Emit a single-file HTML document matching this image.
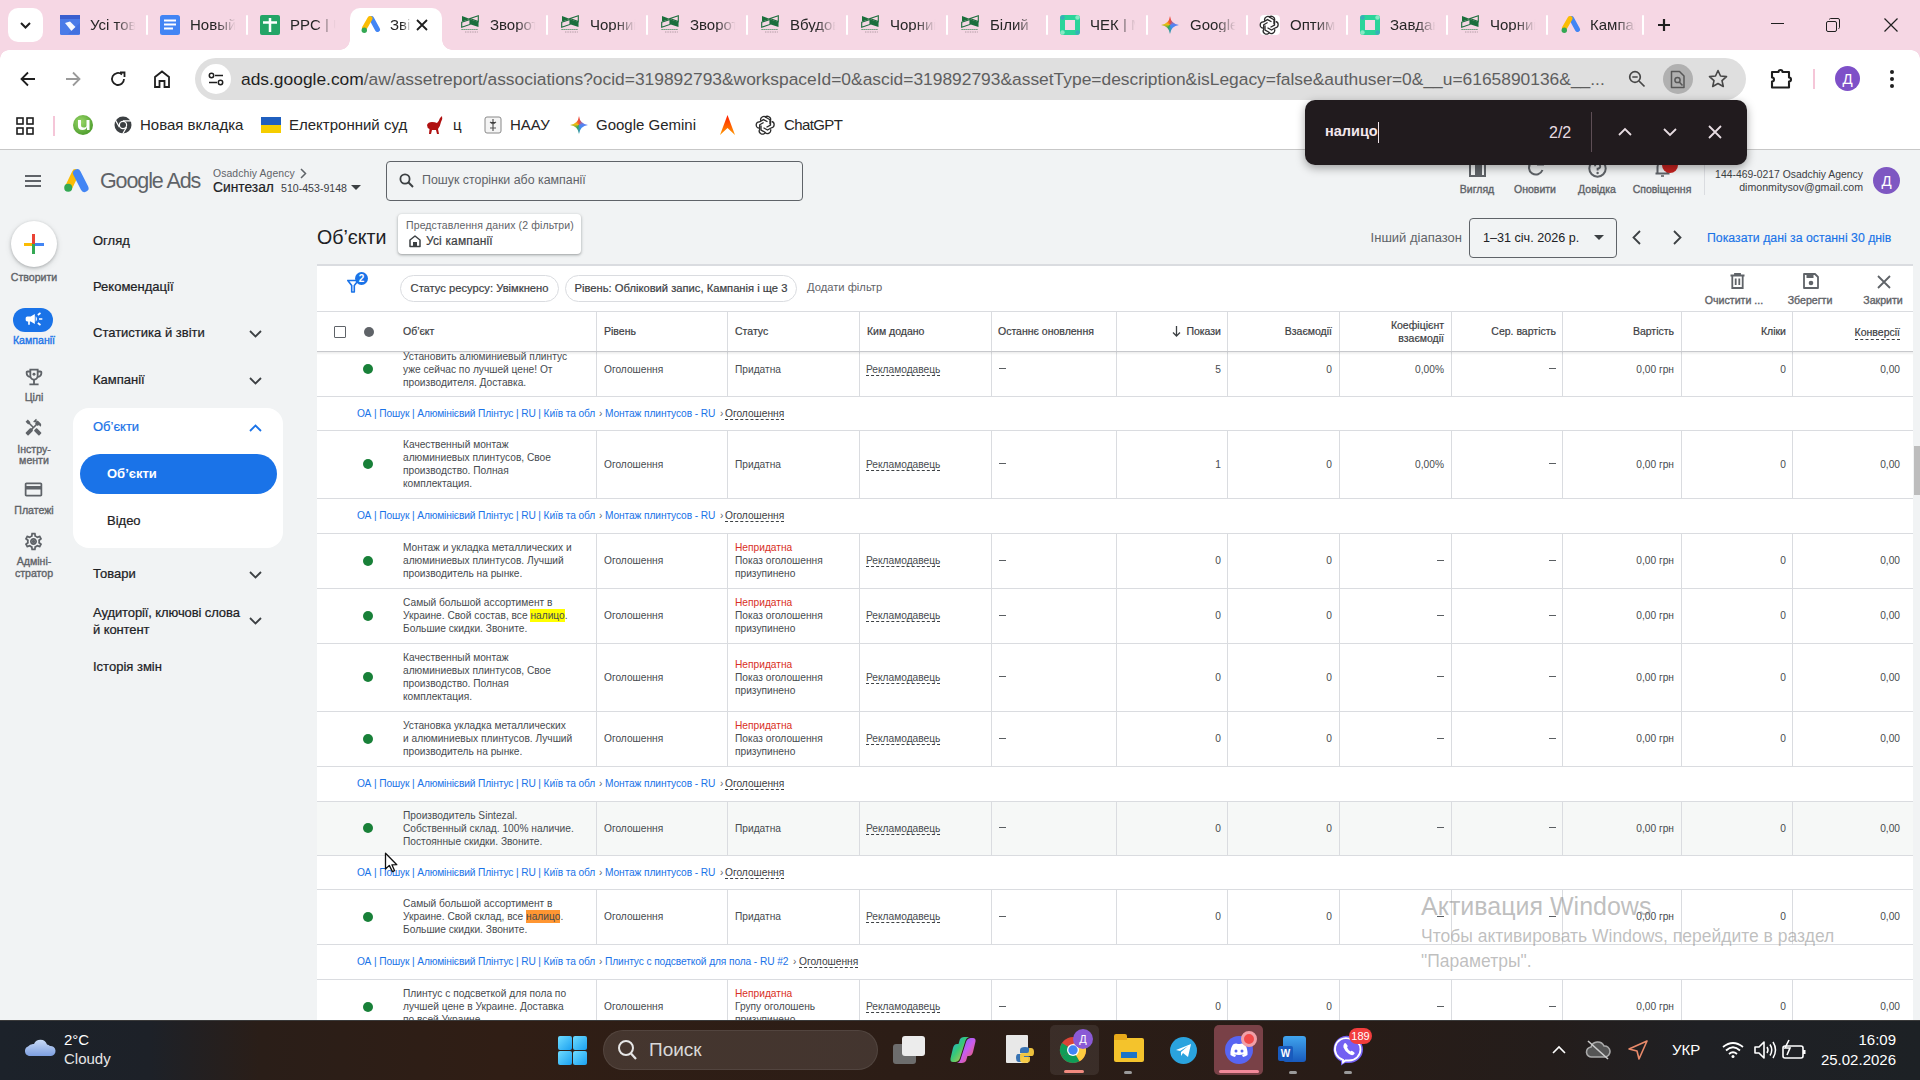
<!DOCTYPE html><html><head><meta charset="utf-8"><style>
*{margin:0;padding:0;box-sizing:border-box}
html,body{width:1920px;height:1080px;overflow:hidden;background:#f1f3f4;font-family:"Liberation Sans",sans-serif;position:relative}
.abs{position:absolute}
.t{position:absolute;white-space:nowrap;line-height:1}
svg{position:absolute;overflow:visible}
.m{-webkit-text-stroke-width:0.35px}
.m2{-webkit-text-stroke-width:0.2px}
</style></head><body>
<div class="abs" style="left:0;top:0;width:1920px;height:50px;background:#f6d7e4"></div>
<div class="abs" style="left:8px;top:8px;width:35px;height:34px;background:#fff;border-radius:10px"></div>
<svg style="left:19px;top:19px" width="13" height="12" viewBox="0 0 13 12"><path d="M2 4 L6.5 8.5 L11 4" stroke="#1f1f1f" stroke-width="2" fill="none"/></svg>
<div class="abs" style="left:146px;top:15px;width:2px;height:20px;background:#fff;border-radius:1px"></div>
<svg style="left:60px;top:15px" width="20" height="20" viewBox="0 0 20 20"><rect width="20" height="20" rx="1.5" fill="#4a7be8"/><rect width="20" height="4" fill="#3a5fcf"/><path d="M5 8L10 6.5L15.5 12L11.5 16Z" fill="#fff" opacity=".95"/><path d="M8 19L20 19V8Z" fill="#3a66d6" opacity=".5"/></svg>
<div class="t" style="left:90px;top:17px;font-size:15px;color:#262626;width:48px;overflow:hidden;-webkit-mask-image:linear-gradient(90deg,#000 55%,transparent 95%)">Усі товари</div>
<div class="abs" style="left:246px;top:15px;width:2px;height:20px;background:#fff;border-radius:1px"></div>
<svg style="left:160px;top:15px" width="20" height="20" viewBox="0 0 20 20"><rect width="20" height="20" rx="2.5" fill="#4285f4"/><path d="M4 5.5H16M4 9.5H16M4 13.5H13" stroke="#fff" stroke-width="2"/></svg>
<div class="t" style="left:190px;top:17px;font-size:15px;color:#262626;width:48px;overflow:hidden;-webkit-mask-image:linear-gradient(90deg,#000 55%,transparent 95%)">Новый</div>
<svg style="left:260px;top:15px" width="20" height="20" viewBox="0 0 20 20"><rect width="20" height="20" rx="2" fill="#23a566"/><path d="M10 3V17M3 7.5H17" stroke="#fff" stroke-width="2.5"/></svg>
<div class="t" style="left:290px;top:17px;font-size:15px;color:#262626;width:48px;overflow:hidden;-webkit-mask-image:linear-gradient(90deg,#000 55%,transparent 95%)">PPC | Ukr</div>
<div class="abs" style="left:350px;top:8px;width:92px;height:42px;background:#fff;border-radius:10px 10px 0 0"></div>
<div class="abs" style="left:340px;top:40px;width:10px;height:10px;background:radial-gradient(circle at 0 0,transparent 9.5px,#fff 10px)"></div>
<div class="abs" style="left:442px;top:40px;width:10px;height:10px;background:radial-gradient(circle at 100% 0,transparent 9.5px,#fff 10px)"></div>
<svg style="left:361px;top:16px" width="19" height="18" viewBox="0 0 19 18"><path d="M10.5 2.5L16.5 13.5" stroke="#4285f4" stroke-width="5" stroke-linecap="round"/><path d="M9 2.5L3.5 12" stroke="#fbbc04" stroke-width="5" stroke-linecap="round"/><circle cx="3.3" cy="14.2" r="2.7" fill="#34a853"/></svg>
<div class="t" style="left:390px;top:17px;font-size:15px;color:#262626;width:22px;overflow:hidden;-webkit-mask-image:linear-gradient(90deg,#000 55%,transparent 95%)">Звіт</div>
<div class="abs" style="left:546px;top:15px;width:2px;height:20px;background:#fff;border-radius:1px"></div>
<svg style="left:461px;top:15px" width="18" height="19" viewBox="0 0 18 19"><path d="M1 1L9 4L1 6.5Z" fill="#1b6e3c"/><path d="M9 4.2L17.5 7V12L9 9.3Z" fill="#1b6e3c"/><path d="M9 3.6L17.3 0.8V6.6Z" stroke="#1b6e3c" stroke-width="1.1" fill="none"/><path d="M0.7 7.2L9 4.5V9.4L0.7 12.2Z" stroke="#1b6e3c" stroke-width="1.1" fill="none"/><path d="M0.5 14.5H17" stroke="#3f8a5a" stroke-width="1.2" stroke-dasharray="1.2 0.8"/><path d="M4 17H17" stroke="#8a7a80" stroke-width="0.8" stroke-dasharray="0.8 0.9"/></svg>
<div class="t" style="left:490px;top:17px;font-size:15px;color:#262626;width:48px;overflow:hidden;-webkit-mask-image:linear-gradient(90deg,#000 55%,transparent 95%)">Зворот</div>
<div class="abs" style="left:646px;top:15px;width:2px;height:20px;background:#fff;border-radius:1px"></div>
<svg style="left:561px;top:15px" width="18" height="19" viewBox="0 0 18 19"><path d="M1 1L9 4L1 6.5Z" fill="#1b6e3c"/><path d="M9 4.2L17.5 7V12L9 9.3Z" fill="#1b6e3c"/><path d="M9 3.6L17.3 0.8V6.6Z" stroke="#1b6e3c" stroke-width="1.1" fill="none"/><path d="M0.7 7.2L9 4.5V9.4L0.7 12.2Z" stroke="#1b6e3c" stroke-width="1.1" fill="none"/><path d="M0.5 14.5H17" stroke="#3f8a5a" stroke-width="1.2" stroke-dasharray="1.2 0.8"/><path d="M4 17H17" stroke="#8a7a80" stroke-width="0.8" stroke-dasharray="0.8 0.9"/></svg>
<div class="t" style="left:590px;top:17px;font-size:15px;color:#262626;width:48px;overflow:hidden;-webkit-mask-image:linear-gradient(90deg,#000 55%,transparent 95%)">Чорний</div>
<div class="abs" style="left:746px;top:15px;width:2px;height:20px;background:#fff;border-radius:1px"></div>
<svg style="left:661px;top:15px" width="18" height="19" viewBox="0 0 18 19"><path d="M1 1L9 4L1 6.5Z" fill="#1b6e3c"/><path d="M9 4.2L17.5 7V12L9 9.3Z" fill="#1b6e3c"/><path d="M9 3.6L17.3 0.8V6.6Z" stroke="#1b6e3c" stroke-width="1.1" fill="none"/><path d="M0.7 7.2L9 4.5V9.4L0.7 12.2Z" stroke="#1b6e3c" stroke-width="1.1" fill="none"/><path d="M0.5 14.5H17" stroke="#3f8a5a" stroke-width="1.2" stroke-dasharray="1.2 0.8"/><path d="M4 17H17" stroke="#8a7a80" stroke-width="0.8" stroke-dasharray="0.8 0.9"/></svg>
<div class="t" style="left:690px;top:17px;font-size:15px;color:#262626;width:48px;overflow:hidden;-webkit-mask-image:linear-gradient(90deg,#000 55%,transparent 95%)">Зворот</div>
<div class="abs" style="left:846px;top:15px;width:2px;height:20px;background:#fff;border-radius:1px"></div>
<svg style="left:761px;top:15px" width="18" height="19" viewBox="0 0 18 19"><path d="M1 1L9 4L1 6.5Z" fill="#1b6e3c"/><path d="M9 4.2L17.5 7V12L9 9.3Z" fill="#1b6e3c"/><path d="M9 3.6L17.3 0.8V6.6Z" stroke="#1b6e3c" stroke-width="1.1" fill="none"/><path d="M0.7 7.2L9 4.5V9.4L0.7 12.2Z" stroke="#1b6e3c" stroke-width="1.1" fill="none"/><path d="M0.5 14.5H17" stroke="#3f8a5a" stroke-width="1.2" stroke-dasharray="1.2 0.8"/><path d="M4 17H17" stroke="#8a7a80" stroke-width="0.8" stroke-dasharray="0.8 0.9"/></svg>
<div class="t" style="left:790px;top:17px;font-size:15px;color:#262626;width:48px;overflow:hidden;-webkit-mask-image:linear-gradient(90deg,#000 55%,transparent 95%)">Вбудов</div>
<div class="abs" style="left:946px;top:15px;width:2px;height:20px;background:#fff;border-radius:1px"></div>
<svg style="left:861px;top:15px" width="18" height="19" viewBox="0 0 18 19"><path d="M1 1L9 4L1 6.5Z" fill="#1b6e3c"/><path d="M9 4.2L17.5 7V12L9 9.3Z" fill="#1b6e3c"/><path d="M9 3.6L17.3 0.8V6.6Z" stroke="#1b6e3c" stroke-width="1.1" fill="none"/><path d="M0.7 7.2L9 4.5V9.4L0.7 12.2Z" stroke="#1b6e3c" stroke-width="1.1" fill="none"/><path d="M0.5 14.5H17" stroke="#3f8a5a" stroke-width="1.2" stroke-dasharray="1.2 0.8"/><path d="M4 17H17" stroke="#8a7a80" stroke-width="0.8" stroke-dasharray="0.8 0.9"/></svg>
<div class="t" style="left:890px;top:17px;font-size:15px;color:#262626;width:48px;overflow:hidden;-webkit-mask-image:linear-gradient(90deg,#000 55%,transparent 95%)">Чорний</div>
<div class="abs" style="left:1046px;top:15px;width:2px;height:20px;background:#fff;border-radius:1px"></div>
<svg style="left:961px;top:15px" width="18" height="19" viewBox="0 0 18 19"><path d="M1 1L9 4L1 6.5Z" fill="#1b6e3c"/><path d="M9 4.2L17.5 7V12L9 9.3Z" fill="#1b6e3c"/><path d="M9 3.6L17.3 0.8V6.6Z" stroke="#1b6e3c" stroke-width="1.1" fill="none"/><path d="M0.7 7.2L9 4.5V9.4L0.7 12.2Z" stroke="#1b6e3c" stroke-width="1.1" fill="none"/><path d="M0.5 14.5H17" stroke="#3f8a5a" stroke-width="1.2" stroke-dasharray="1.2 0.8"/><path d="M4 17H17" stroke="#8a7a80" stroke-width="0.8" stroke-dasharray="0.8 0.9"/></svg>
<div class="t" style="left:990px;top:17px;font-size:15px;color:#262626;width:48px;overflow:hidden;-webkit-mask-image:linear-gradient(90deg,#000 55%,transparent 95%)">Білий</div>
<div class="abs" style="left:1146px;top:15px;width:2px;height:20px;background:#fff;border-radius:1px"></div>
<svg style="left:1060px;top:15px" width="20" height="20" viewBox="0 0 20 20"><rect x="0" y="0" width="20" height="20" rx="3" fill="#2bd49a"/><rect x="5" y="5" width="10" height="10" fill="#f6d7e4"/><circle cx="2.5" cy="2.5" r="2.2" fill="#3aa6c0" opacity=".8"/><circle cx="17.5" cy="17.5" r="2.2" fill="#3aa6c0" opacity=".8"/><circle cx="17.5" cy="2.5" r="2.2" fill="#9ef0d0" opacity=".8"/><circle cx="2.5" cy="17.5" r="2.2" fill="#9ef0d0" opacity=".8"/></svg>
<div class="t" style="left:1090px;top:17px;font-size:15px;color:#262626;width:48px;overflow:hidden;-webkit-mask-image:linear-gradient(90deg,#000 55%,transparent 95%)">ЧЕК | М</div>
<div class="abs" style="left:1246px;top:15px;width:2px;height:20px;background:#fff;border-radius:1px"></div>
<div class="abs" style="left:1161px;top:16px;width:18px;height:18px;background:conic-gradient(from 0deg,#f04a3a 0deg,#5a7ff0 80deg,#3f8cf2 150deg,#34a853 215deg,#f5c010 285deg,#f04a3a 360deg);clip-path:path('M9.0 0Q10.0 8.0 18.0 9.0Q10.0 10.0 9.0 18.0Q8.0 10.0 0 9.0Q8.0 8.0 9.0 0Z')"></div>
<div class="t" style="left:1190px;top:17px;font-size:15px;color:#262626;width:48px;overflow:hidden;-webkit-mask-image:linear-gradient(90deg,#000 55%,transparent 95%)">Google</div>
<div class="abs" style="left:1346px;top:15px;width:2px;height:20px;background:#fff;border-radius:1px"></div>
<svg style="left:1260px;top:15px" width="20" height="20" viewBox="0 0 20 20"><rect width="20" height="20" rx="4" fill="#fff"/></svg><svg style="left:1261px;top:16px" width="18" height="18" viewBox="0 0 18 18"><g fill="none" stroke="#2b2b2b" stroke-width="1.3"><path d="M8 1.5A3.2 3.2 0 0 1 13.5 4.5L13.5 9L9.5 11.3"/><path d="M14.6 5.5A3.2 3.2 0 0 1 14.4 11.8L10.5 14L6.5 11.8"/><path d="M13.5 13.2A3.2 3.2 0 0 1 8 16.3L4 14L4 9.5"/><path d="M8.3 16.5A3.2 3.2 0 0 1 2.7 13.3L2.7 8.8L6.6 6.5"/><path d="M2.2 12.2A3.2 3.2 0 0 1 2.6 5.8L6.5 3.6L10.5 5.8"/><path d="M3.8 4.8A3.2 3.2 0 0 1 9.2 1.6L13 3.8L13 8.3"/></g></svg>
<div class="t" style="left:1290px;top:17px;font-size:15px;color:#262626;width:48px;overflow:hidden;-webkit-mask-image:linear-gradient(90deg,#000 55%,transparent 95%)">Оптими</div>
<div class="abs" style="left:1446px;top:15px;width:2px;height:20px;background:#fff;border-radius:1px"></div>
<svg style="left:1360px;top:15px" width="20" height="20" viewBox="0 0 20 20"><rect x="0" y="0" width="20" height="20" rx="3" fill="#2bd49a"/><rect x="5" y="5" width="10" height="10" fill="#f6d7e4"/><circle cx="2.5" cy="2.5" r="2.2" fill="#3aa6c0" opacity=".8"/><circle cx="17.5" cy="17.5" r="2.2" fill="#3aa6c0" opacity=".8"/><circle cx="17.5" cy="2.5" r="2.2" fill="#9ef0d0" opacity=".8"/><circle cx="2.5" cy="17.5" r="2.2" fill="#9ef0d0" opacity=".8"/></svg>
<div class="t" style="left:1390px;top:17px;font-size:15px;color:#262626;width:48px;overflow:hidden;-webkit-mask-image:linear-gradient(90deg,#000 55%,transparent 95%)">Завдан</div>
<div class="abs" style="left:1546px;top:15px;width:2px;height:20px;background:#fff;border-radius:1px"></div>
<svg style="left:1461px;top:15px" width="18" height="19" viewBox="0 0 18 19"><path d="M1 1L9 4L1 6.5Z" fill="#1b6e3c"/><path d="M9 4.2L17.5 7V12L9 9.3Z" fill="#1b6e3c"/><path d="M9 3.6L17.3 0.8V6.6Z" stroke="#1b6e3c" stroke-width="1.1" fill="none"/><path d="M0.7 7.2L9 4.5V9.4L0.7 12.2Z" stroke="#1b6e3c" stroke-width="1.1" fill="none"/><path d="M0.5 14.5H17" stroke="#3f8a5a" stroke-width="1.2" stroke-dasharray="1.2 0.8"/><path d="M4 17H17" stroke="#8a7a80" stroke-width="0.8" stroke-dasharray="0.8 0.9"/></svg>
<div class="t" style="left:1490px;top:17px;font-size:15px;color:#262626;width:48px;overflow:hidden;-webkit-mask-image:linear-gradient(90deg,#000 55%,transparent 95%)">Чорний</div>
<div class="abs" style="left:1642px;top:15px;width:2px;height:20px;background:#fff;border-radius:1px"></div>
<svg style="left:1561px;top:16px" width="19" height="18" viewBox="0 0 19 18"><path d="M10.5 2.5L16.5 13.5" stroke="#4285f4" stroke-width="5" stroke-linecap="round"/><path d="M9 2.5L3.5 12" stroke="#fbbc04" stroke-width="5" stroke-linecap="round"/><circle cx="3.3" cy="14.2" r="2.7" fill="#34a853"/></svg>
<div class="t" style="left:1590px;top:17px;font-size:15px;color:#262626;width:48px;overflow:hidden;-webkit-mask-image:linear-gradient(90deg,#000 55%,transparent 95%)">Кампанії</div>
<svg style="left:416px;top:19px" width="12" height="12" viewBox="0 0 12 12"><path d="M1 1L11 11M11 1L1 11" stroke="#1f1f1f" stroke-width="1.8"/></svg>
<svg style="left:1658px;top:19px" width="12" height="12" viewBox="0 0 12 12"><path d="M6 0V12M0 6H12" stroke="#1f1f1f" stroke-width="2.2"/></svg>
<div class="abs" style="left:1771px;top:23px;width:13px;height:1px;background:#1f1f1f"></div>
<svg style="left:1826px;top:18px" width="14" height="14" viewBox="0 0 14 14"><rect x="0.5" y="3.5" width="10" height="10" rx="1.5" stroke="#1f1f1f" fill="none"/><path d="M3.5 1.5 Q3.5 0.5 4.5 0.5 H12 Q13.5 0.5 13.5 2 V9.5 Q13.5 10.5 12.5 10.5" stroke="#1f1f1f" fill="none"/></svg>
<svg style="left:1884px;top:18px" width="14" height="14" viewBox="0 0 14 14"><path d="M0.5 0.5L13.5 13.5M13.5 0.5L0.5 13.5" stroke="#1f1f1f" stroke-width="1.2"/></svg>
<div class="abs" style="left:0;top:50px;width:1920px;height:100px;background:#fff"></div>
<div class="abs" style="left:0;top:50px;width:9px;height:9px;background:radial-gradient(circle at 100% 100%,#fff 8.5px,#f6d7e4 9px)"></div>
<div class="abs" style="left:1911px;top:50px;width:9px;height:9px;background:radial-gradient(circle at 0 100%,#fff 8.5px,#f6d7e4 9px)"></div>
<svg style="left:20px;top:71px" width="16" height="16" viewBox="0 0 16 16"><path d="M15 8H2M8 1.5L1.5 8L8 14.5" stroke="#1f1f1f" stroke-width="1.8" fill="none"/></svg>
<svg style="left:65px;top:71px" width="16" height="16" viewBox="0 0 16 16"><path d="M1 8H14M8 1.5L14.5 8L8 14.5" stroke="#9a9a9a" stroke-width="1.8" fill="none"/></svg>
<svg style="left:110px;top:71px" width="16" height="16" viewBox="0 0 16 16"><path d="M14 8A6 6 0 1 1 12 3.5" stroke="#1f1f1f" stroke-width="1.8" fill="none"/><path d="M10 1.5H14.5V6" stroke="#1f1f1f" stroke-width="1.8" fill="none"/></svg>
<svg style="left:154px;top:70px" width="16" height="18" viewBox="0 0 16 18"><path d="M1 17V7L8 1.5L15 7V17H10.5V11H5.5V17Z" stroke="#1f1f1f" stroke-width="1.8" fill="none" stroke-linejoin="miter"/></svg>
<div class="abs" style="left:195px;top:58px;width:1551px;height:42px;background:#dfdfdf;border-radius:21px"></div>
<div class="abs" style="left:201px;top:64px;width:30px;height:30px;background:#fff;border-radius:15px"></div>
<svg style="left:208px;top:72px" width="16" height="14" viewBox="0 0 16 14"><circle cx="3.5" cy="3.5" r="2.2" stroke="#1f1f1f" stroke-width="1.5" fill="none"/><path d="M7 3.5H15M1 10.5H9" stroke="#1f1f1f" stroke-width="1.5"/><circle cx="12.5" cy="10.5" r="2.2" stroke="#1f1f1f" stroke-width="1.5" fill="none"/></svg>
<div class="t" id="url" style="left:241px;top:71px;font-size:17.4px;color:#1f1f1f"><span>ads.google.com</span><span style="color:#5e5e5e">/aw/assetreport/associations?ocid=319892793&amp;workspaceId=0&amp;ascid=319892793&amp;assetType=description&amp;isLegacy=false&amp;authuser=0&amp;__u=6165890136&amp;__...</span></div>
<svg style="left:1628px;top:70px" width="18" height="18" viewBox="0 0 18 18"><circle cx="7" cy="7" r="5.3" stroke="#474747" stroke-width="1.7" fill="none"/><path d="M11 11L16.5 16.5M4.3 7H9.7" stroke="#474747" stroke-width="1.7"/></svg>
<div class="abs" style="left:1663px;top:64px;width:30px;height:30px;background:#b0b0b0;border-radius:15px"></div>
<svg style="left:1670px;top:70px" width="16" height="19" viewBox="0 0 16 19"><path d="M1.5 1.5H9.5L14 6V17.5H1.5Z" stroke="#575757" stroke-width="1.5" fill="none" stroke-linejoin="round"/><circle cx="7.5" cy="10" r="2.6" stroke="#575757" stroke-width="1.5" fill="none"/><path d="M9.3 12L12.5 15.5" stroke="#575757" stroke-width="1.5"/></svg>
<svg style="left:1708px;top:69px" width="20" height="19" viewBox="0 0 20 19"><path d="M10 1.5L12.5 7L18.5 7.6L14 11.6L15.3 17.5L10 14.5L4.7 17.5L6 11.6L1.5 7.6L7.5 7Z" stroke="#474747" stroke-width="1.6" fill="none" stroke-linejoin="round"/></svg>
<svg style="left:1770px;top:66px" width="24" height="24" viewBox="0 0 24 24"><path d="M2 6H8.5A2 2 0 0 1 12.5 6H19V11.5A2 2 0 0 1 19 15.5V21.5H2V15.5A2 2 0 0 0 2 11.5Z" stroke="#1f1f1f" stroke-width="2.1" fill="none" stroke-linejoin="round"/></svg>
<div class="abs" style="left:1813px;top:69px;width:2px;height:20px;background:#f5c6d8"></div>
<div class="abs" style="left:1835px;top:66px;width:25px;height:25px;background:#7e50c8;border-radius:50%;color:#fff;font-size:15px;text-align:center;line-height:25px">Д</div>
<div class="abs" style="left:1890px;top:70px;width:4px;height:4px;background:#1f1f1f;border-radius:2px"></div>
<div class="abs" style="left:1890px;top:77px;width:4px;height:4px;background:#1f1f1f;border-radius:2px"></div>
<div class="abs" style="left:1890px;top:84px;width:4px;height:4px;background:#1f1f1f;border-radius:2px"></div>
<svg style="left:16px;top:117px" width="18" height="18" viewBox="0 0 18 18"><rect x="1" y="1" width="6" height="6" stroke="#1f1f1f" stroke-width="1.6" fill="none"/><rect x="11" y="1" width="6" height="6" stroke="#1f1f1f" stroke-width="1.6" fill="none"/><rect x="1" y="11" width="6" height="6" stroke="#1f1f1f" stroke-width="1.6" fill="none"/><rect x="11" y="11" width="6" height="6" stroke="#1f1f1f" stroke-width="1.6" fill="none"/></svg>
<div class="abs" style="left:53px;top:116px;width:2px;height:20px;background:#f5c6d8"></div>
<svg style="left:73px;top:115px" width="20" height="20" viewBox="0 0 20 20"><defs><radialGradient id="ut" cx=".4" cy=".35" r=".7"><stop offset="0" stop-color="#9ad86a"/><stop offset="1" stop-color="#4a9a2a"/></radialGradient></defs><circle cx="10" cy="10" r="10" fill="url(#ut)"/><path d="M5 5V11Q5 15 9.5 15Q13 15 14 12V15H16.5V5H13.5V10.5Q13.5 12.5 10.5 12.5Q8 12.5 8 10V5Z" fill="#fff"/></svg>
<svg style="left:114px;top:116px" width="18" height="18" viewBox="0 0 18 18"><circle cx="9" cy="9" r="8.5" fill="#3c4043"/><circle cx="9" cy="9" r="4.2" fill="#fff"/><circle cx="9" cy="9" r="3" fill="#3c4043"/><path d="M9 4.8H17M5.4 11.1L1.5 4.3M12.6 11.1L8.6 18" stroke="#fff" stroke-width="1.2"/></svg>
<div class="abs" style="left:261px;top:117px;width:20px;height:8px;background:#1f5fbf"></div><div class="abs" style="left:261px;top:125px;width:20px;height:8px;background:#f5cd00"></div>
<svg style="left:426px;top:115px" width="18" height="20" viewBox="0 0 18 20"><path d="M16 1Q17 4 15 7Q14 12 12 14L13 19H11L10 15Q8 15 6 15L5 19H3L3.5 14Q1 13 1 10Q2 7 6 7Q9 7 11 8Q13 6 14 3Z" fill="#b01010"/></svg>
<svg style="left:484px;top:116px" width="18" height="18" viewBox="0 0 18 18"><rect x="1" y="1" width="16" height="16" rx="2" fill="#f4f4f4" stroke="#888" stroke-width="1"/><path d="M9 3V15M6 6L9 8L12 6M6 12H12" stroke="#555" stroke-width="1.2"/></svg>
<div class="abs" style="left:570px;top:116px;width:18px;height:18px;background:conic-gradient(from 0deg,#f04a3a 0deg,#5a7ff0 80deg,#3f8cf2 150deg,#34a853 215deg,#f5c010 285deg,#f04a3a 360deg);clip-path:path('M9.0 0Q10.0 8.0 18.0 9.0Q10.0 10.0 9.0 18.0Q8.0 10.0 0 9.0Q8.0 8.0 9.0 0Z')"></div>
<svg style="left:720px;top:115px" width="15" height="20" viewBox="0 0 15 20"><defs><linearGradient id="adb" x1="0" y1="1" x2="0" y2="0"><stop offset="0" stop-color="#ff9a00"/><stop offset="1" stop-color="#ff1a00"/></linearGradient></defs><path d="M7.5 0L15 20L7.5 13L0 20Z" fill="url(#adb)"/></svg>
<svg style="left:757px;top:116px" width="18" height="18" viewBox="0 0 18 18"><g fill="none" stroke="#2b2b2b" stroke-width="1.3"><path d="M8 1.5A3.2 3.2 0 0 1 13.5 4.5L13.5 9L9.5 11.3"/><path d="M14.6 5.5A3.2 3.2 0 0 1 14.4 11.8L10.5 14L6.5 11.8"/><path d="M13.5 13.2A3.2 3.2 0 0 1 8 16.3L4 14L4 9.5"/><path d="M8.3 16.5A3.2 3.2 0 0 1 2.7 13.3L2.7 8.8L6.6 6.5"/><path d="M2.2 12.2A3.2 3.2 0 0 1 2.6 5.8L6.5 3.6L10.5 5.8"/><path d="M3.8 4.8A3.2 3.2 0 0 1 9.2 1.6L13 3.8L13 8.3"/></g></svg>
<div class="t" style="left:140px;top:117px;font-size:15px;color:#262626;">Новая вкладка</div>
<div class="t" style="left:289px;top:117px;font-size:15px;color:#262626;">Електронний суд</div>
<div class="t" style="left:453px;top:117px;font-size:15px;color:#262626;">ц</div>
<div class="t" style="left:510px;top:117px;font-size:15px;color:#262626;">НААУ</div>
<div class="t" style="left:596px;top:117px;font-size:15px;color:#262626;">Google Gemini</div>
<div class="t" style="left:784px;top:117px;font-size:15px;color:#262626;letter-spacing:-0.6px">ChatGPT</div>
<div class="abs" style="left:0;top:149px;width:1920px;height:1px;background:#c7c7c7"></div>
<div class="abs" style="left:25px;top:175px;width:16px;height:2px;background:#5f6368"></div>
<div class="abs" style="left:25px;top:180px;width:16px;height:2px;background:#5f6368"></div>
<div class="abs" style="left:25px;top:185px;width:16px;height:2px;background:#5f6368"></div>
<svg style="left:63px;top:169px" width="27" height="24" viewBox="0 0 27 24"><path d="M12.5 4L5.8 18" stroke="#fbbc04" stroke-width="7.5" stroke-linecap="round"/><circle cx="5.2" cy="18.8" r="4" fill="#34a853"/><path d="M14 4.3L21.5 19" stroke="#4285f4" stroke-width="8" stroke-linecap="round"/></svg>
<div class="t" style="left:100px;top:171px;font-size:21.5px;color:#5f6368;letter-spacing:-1.1px">Google Ads</div>
<div class="t" style="left:213px;top:169px;font-size:10.4px;color:#5f6368;letter-spacing:0.1px">Osadchiy Agency</div>
<svg style="left:300px;top:168px" width="7" height="11" viewBox="0 0 7 11"><path d="M1 1L5.5 5.5L1 10" stroke="#5f6368" stroke-width="1.5" fill="none"/></svg>
<div class="t m2" style="left:213px;top:181px;font-size:13.8px;color:#202124">Синтезал</div>
<div class="t" style="left:281px;top:183px;font-size:10.6px;color:#3c4043">510-453-9148</div>
<svg style="left:351px;top:185px" width="10" height="5" viewBox="0 0 10 5"><path d="M0 0H10L5 5Z" fill="#3c4043"/></svg>
<div class="abs" style="left:386px;top:161px;width:417px;height:40px;border:1px solid #5f6368;border-radius:4px"></div>
<svg style="left:399px;top:173px" width="15" height="15" viewBox="0 0 15 15"><circle cx="6" cy="6" r="4.6" stroke="#3c4043" stroke-width="1.8" fill="none"/><path d="M9.3 9.3L14 14" stroke="#3c4043" stroke-width="2"/></svg>
<div class="t" style="left:422px;top:174px;font-size:12.4px;color:#5f6368">Пошук сторінки або кампанії</div>
<div class="t m" style="left:1427px;width:100px;text-align:center;top:184px;font-size:10.5px;color:#5f6368">Вигляд</div>
<div class="t m" style="left:1485px;width:100px;text-align:center;top:184px;font-size:10.5px;color:#5f6368">Оновити</div>
<div class="t m" style="left:1547px;width:100px;text-align:center;top:184px;font-size:10.5px;color:#5f6368">Довідка</div>
<div class="t m" style="left:1612px;width:100px;text-align:center;top:184px;font-size:10.5px;color:#5f6368">Сповіщення</div>
<div class="abs" style="left:1469px;top:158px;width:17px;height:19px;border:2px solid #5f6368"></div>
<div class="abs" style="left:1473px;top:158px;width:9px;height:19px;background:#5f6368"></div>
<div class="abs" style="left:1473px;top:160px;width:2px;height:15px;background:#f1f3f4"></div>
<svg style="left:1527px;top:158px" width="18" height="19" viewBox="0 0 18 19"><path d="M15 6A7 7 0 1 0 15.5 12" stroke="#5f6368" stroke-width="2" fill="none"/><path d="M10 6.5H16V0.5" stroke="#5f6368" stroke-width="2" fill="none"/></svg>
<svg style="left:1588px;top:159px" width="19" height="19" viewBox="0 0 19 19"><circle cx="9.5" cy="9.5" r="8.2" stroke="#5f6368" stroke-width="2" fill="none"/><path d="M7 7.3A2.6 2.6 0 1 1 9.6 9.8V11.5" stroke="#5f6368" stroke-width="1.9" fill="none"/><circle cx="9.6" cy="14" r="1.2" fill="#5f6368"/></svg>
<svg style="left:1655px;top:158px" width="15" height="20" viewBox="0 0 15 20"><path d="M2.5 15V9A5 5 0 0 1 12.5 9V15M0.5 15.5H14.5" stroke="#5f6368" stroke-width="2" fill="none"/><path d="M6 18H9" stroke="#5f6368" stroke-width="1.6"/></svg>
<div class="abs" style="left:1662px;top:157px;width:16px;height:16px;border-radius:50%;background:#c5221f"></div>
<div class="abs" style="left:1704px;top:162px;width:1px;height:33px;background:#dadce0"></div>
<div class="t" style="left:1663px;width:200px;text-align:right;top:170px;font-size:10.4px;color:#3c4043">144-469-0217 Osadchiy Agency</div>
<div class="t" style="left:1663px;width:200px;text-align:right;top:182px;font-size:10.6px;color:#3c4043">dimonmitysov@gmail.com</div>
<div class="abs" style="left:1873px;top:167px;width:27px;height:27px;border-radius:50%;background:#7e57c2;color:#fff;font-size:15px;line-height:27px;text-align:center">Д</div>
<div class="abs" style="left:11px;top:221px;width:46px;height:46px;border-radius:50%;background:#fff;box-shadow:0 1px 3px rgba(60,64,67,.3),0 2px 6px rgba(60,64,67,.15)"></div>
<div class="abs" style="left:24px;top:243px;width:10px;height:3px;background:#fbbc04"></div>
<div class="abs" style="left:34px;top:243px;width:10px;height:3px;background:#4285f4"></div>
<div class="abs" style="left:32px;top:234px;width:3px;height:10px;background:#ea4335"></div>
<div class="abs" style="left:32px;top:244px;width:3px;height:10px;background:#34a853"></div>
<div class="t m" style="left:0;width:68px;text-align:center;top:272px;font-size:10.6px;color:#5f6368">Створити</div>
<div class="abs" style="left:13px;top:308px;width:40px;height:24px;border-radius:12px;background:#1a73e8"></div>
<svg style="left:24px;top:309px" width="20" height="20" viewBox="0 0 24 24"><path fill="#fff" d="M18 11v2h4v-2h-4zm-2 6.61c.96.71 2.21 1.65 3.2 2.39.4-.53.8-1.07 1.2-1.6-.99-.74-2.24-1.68-3.2-2.4-.4.54-.8 1.080-1.2 1.61zM20.4 5.6c-.4-.53-.8-1.07-1.2-1.6-.99.74-2.24 1.68-3.2 2.4.4.53.8 1.07 1.2 1.6.96-.72 2.21-1.65 3.2-2.4zM4 9c-1.1 0-2 .9-2 2v2c0 1.1.9 2 2 2h1v4h2v-4h1l5 3V6L8 9H4zm11.5 3c0-1.33-.58-2.53-1.5-3.35v6.690c.92-.81 1.5-2.01 1.5-3.34z"/></svg>
<div class="t m" style="left:0;width:68px;text-align:center;top:335px;font-size:10.6px;color:#1a73e8">Кампанії</div>
<svg style="left:23px;top:366px" width="22" height="22" viewBox="0 0 24 24"><path fill="#5f6368" d="M19 5h-2V3H7v2H5c-1.1 0-2 .9-2 2v1c0 2.55 1.92 4.63 4.39 4.94A5.01 5.01 0 0 0 11 15.9V19H7v2h10v-2h-4v-3.1a5.01 5.01 0 0 0 3.61-2.96C19.08 12.63 21 10.55 21 8V7c0-1.1-.9-2-2-2zM5 8V7h2v3.82C5.84 10.4 5 9.3 5 8zm7 6c-1.650 0-3-1.35-3-3V5h6v6c0 1.65-1.35 3-3 3zm7-6c0 1.3-.84 2.4-2 2.82V7h2v1z"/><circle cx="12" cy="9" r="1.6" fill="#5f6368"/></svg>
<div class="t m" style="left:0;width:68px;text-align:center;top:392px;font-size:10.6px;color:#5f6368">Цілі</div>
<svg style="left:24px;top:418px" width="19" height="19" viewBox="0 0 24 24"><path fill="#5f6368" d="M21.67 18.17l-5.3-5.3h-.99l-2.54 2.54v.99l5.3 5.3c.39.39 1.02.39 1.41 0l2.12-2.12c.39-.38.39-1.02 0-1.41zM17.34 10.19l1.41-1.41 2.12 2.12c1.17-1.17 1.17-3.07 0-4.24l-3.54-3.54-1.41 1.41V1.71l-.7-.71-3.54 3.54.71.71h2.83l-1.41 1.41 1.06 1.06-2.89 2.89-4.13-4.13V5.06L4.830 2.04 2 4.87 5.03 7.9h1.41l4.13 4.13-.85.85H7.6l-5.3 5.3c-.39.39-.39 1.02 0 1.41l2.12 2.12c.39.39 1.02.39 1.41 0l5.3-5.3v-2.12l5.15-5.15 1.06 1.05z"/></svg>
<div class="t m" style="left:0;width:68px;text-align:center;top:444px;font-size:10.6px;color:#5f6368">Інстру-</div>
<div class="t m" style="left:0;width:68px;text-align:center;top:455px;font-size:10.6px;color:#5f6368">менти</div>
<svg style="left:23px;top:479px" width="21" height="21" viewBox="0 0 24 24"><path fill="#5f6368" d="M20 4H4c-1.11 0-1.99.89-1.99 2L2 18c0 1.11.89 2 2 2h16c1.11 0 2-.89 2-2V6c0-1.11-.89-2-2-2zm0 14H4v-6h16v6zm0-10H4V6h16v2z"/></svg>
<div class="t m" style="left:0;width:68px;text-align:center;top:505px;font-size:10.6px;color:#5f6368">Платежі</div>
<svg style="left:23px;top:531px" width="21" height="21" viewBox="0 0 24 24"><path fill="#5f6368" d="M19.43 12.98c.04-.32.07-.64.07-.98 0-.34-.03-.66-.07-.98l2.11-1.65c.19-.15.24-.42.12-.64l-2-3.46a.5.5 0 0 0-.61-.22l-2.49 1c-.52-.4-1.08-.73-1.69-.98l-.38-2.65A.488.488 0 0 0 14 2h-4c-.25 0-.46.18-.49.42l-.38 2.65c-.61.25-1.17.59-1.69.98l-2.49-1a.566.566 0 0 0-.18-.03c-.17 0-.34.09-.43.25l-2 3.46c-.13.22-.07.49.12.64l2.11 1.65c-.04.32-.07.65-.07.98s.03.66.07.98l-2.11 1.65c-.19.15-.24.42-.12.64l2 3.46a.5.5 0 0 0 .61.22l2.49-1c.52.4 1.08.73 1.69.98l.38 2.65c.03.24.24.42.49.42h4c.25 0 .46-.18.49-.42l.38-2.65c.61-.25 1.17-.59 1.69-.98l2.49 1c.06.02.12.03.18.03.17 0 .34-.09.43-.25l2-3.46c.12-.22.07-.49-.12-.64l-2.11-1.65zm-1.98-1.71c.04.31.05.52.05.73 0 .21-.02.43-.05.73l-.14 1.13.89.7 1.08.84-.7 1.21-1.27-.51-1.04-.42-.9.68c-.43.32-.84.56-1.25.73l-1.06.43-.16 1.13-.2 1.35h-1.4l-.19-1.35-.16-1.13-1.06-.43c-.43-.18-.83-.41-1.23-.71l-.91-.7-1.06.43-1.27.51-.7-1.21 1.08-.84.89-.7-.14-1.13c-.03-.31-.05-.54-.05-.74s.02-.43.05-.73l.14-1.13-.89-.7-1.08-.84.7-1.21 1.27.51 1.04.42.9-.68c.43-.32.84-.56 1.25-.73l1.06-.43.16-1.13.2-1.35h1.39l.19 1.35.16 1.13 1.06.43c.43.18.83.41 1.23.71l.91.7 1.06-.43 1.27-.51.7 1.21-1.07.85-.89.7.14 1.13zM12 8c-2.21 0-4 1.79-4 4s1.79 4 4 4 4-1.79 4-4-1.79-4-4-4zm0 6c-1.1 0-2-.9-2-2s.9-2 2-2 2 .9 2 2-.9 2-2 2z"/><circle cx="12" cy="12" r="2" fill="#5f6368"/></svg>
<div class="t m" style="left:0;width:68px;text-align:center;top:556px;font-size:10.6px;color:#5f6368">Адміні-</div>
<div class="t m" style="left:0;width:68px;text-align:center;top:568px;font-size:10.6px;color:#5f6368">стратор</div>
<div class="t" style="left:93px;top:234px;font-size:13px;color:#202124;-webkit-text-stroke-width:0.22px;">Огляд</div>
<div class="t" style="left:93px;top:280px;font-size:13px;color:#202124;-webkit-text-stroke-width:0.22px;">Рекомендації</div>
<div class="t" style="left:93px;top:326px;font-size:13px;color:#202124;-webkit-text-stroke-width:0.22px;">Статистика й звіти</div>
<svg style="left:249px;top:330px" width="13" height="8" viewBox="0 0 13 8"><path d="M1 1L6.5 6.5L12 1" stroke="#3c4043" stroke-width="1.8" fill="none"/></svg>
<div class="t" style="left:93px;top:373px;font-size:13px;color:#202124;-webkit-text-stroke-width:0.22px;">Кампанії</div>
<svg style="left:249px;top:377px" width="13" height="8" viewBox="0 0 13 8"><path d="M1 1L6.5 6.5L12 1" stroke="#3c4043" stroke-width="1.8" fill="none"/></svg>
<div class="abs" style="left:73px;top:408px;width:210px;height:140px;background:#fff;border-radius:16px"></div>
<div class="t" style="left:93px;top:420px;font-size:13px;color:#1a73e8;-webkit-text-stroke-width:0.22px;">Об’єкти</div>
<svg style="left:249px;top:424px" width="13" height="8" viewBox="0 0 13 8"><path d="M1 7L6.5 1.5L12 7" stroke="#1a73e8" stroke-width="1.8" fill="none"/></svg>
<div class="abs" style="left:80px;top:454px;width:197px;height:40px;background:#1a73e8;border-radius:20px"></div>
<div class="t" style="left:107px;top:467px;font-size:13px;color:#fff;font-weight:bold;">Об’єкти</div>
<div class="t" style="left:107px;top:514px;font-size:13px;color:#202124;-webkit-text-stroke-width:0.22px;">Відео</div>
<div class="t" style="left:93px;top:567px;font-size:13px;color:#202124;-webkit-text-stroke-width:0.22px;">Товари</div>
<svg style="left:249px;top:571px" width="13" height="8" viewBox="0 0 13 8"><path d="M1 1L6.5 6.5L12 1" stroke="#3c4043" stroke-width="1.8" fill="none"/></svg>
<div class="t" style="left:93px;top:604px;font-size:13px;color:#202124;line-height:17px;white-space:normal;width:160px;-webkit-text-stroke-width:0.22px;letter-spacing:-0.1px">Аудиторії, ключові слова<br>й контент</div>
<svg style="left:249px;top:617px" width="13" height="8" viewBox="0 0 13 8"><path d="M1 1L6.5 6.5L12 1" stroke="#3c4043" stroke-width="1.8" fill="none"/></svg>
<div class="t" style="left:93px;top:660px;font-size:13px;color:#202124;-webkit-text-stroke-width:0.22px;">Історія змін</div>
<div class="t" style="left:317px;top:228px;font-size:19.6px;color:#202124">Об’єкти</div>
<div class="abs" style="left:398px;top:214px;width:183px;height:40px;background:#fff;border-radius:4px;box-shadow:0 1px 2px rgba(60,64,67,.3),0 1px 3px 1px rgba(60,64,67,.15)"></div>
<div class="t" style="left:406px;top:220px;font-size:10.5px;color:#5f6368;letter-spacing:0.12px">Представлення даних (2 фільтри)</div>
<svg style="left:409px;top:235px" width="12" height="12" viewBox="0 0 12 12"><path d="M1 11.5V5L6 1L11 5V11.5Z" stroke="#3c4043" stroke-width="1.5" fill="none" stroke-linejoin="round"/><rect x="4" y="7" width="4" height="4.5" fill="#3c4043"/></svg>
<div class="t m2" style="left:426px;top:235px;font-size:12px;color:#3c4043;letter-spacing:0.15px">Усі кампанії</div>
<div class="t" style="left:1262px;width:200px;text-align:right;top:231px;font-size:13px;color:#5f6368">Інший діапазон</div>
<div class="abs" style="left:1469px;top:218px;width:148px;height:40px;border:1px solid #5f6368;border-radius:4px"></div>
<div class="t" style="left:1483px;top:232px;font-size:12.6px;color:#202124">1–31 січ. 2026 р.</div>
<svg style="left:1594px;top:235px" width="10" height="5" viewBox="0 0 10 5"><path d="M0 0H10L5 5Z" fill="#3c4043"/></svg>
<svg style="left:1632px;top:230px" width="9" height="15" viewBox="0 0 9 15"><path d="M8 1L1.5 7.5L8 14" stroke="#3c4043" stroke-width="1.8" fill="none"/></svg>
<svg style="left:1673px;top:230px" width="9" height="15" viewBox="0 0 9 15"><path d="M1 1L7.5 7.5L1 14" stroke="#3c4043" stroke-width="1.8" fill="none"/></svg>
<div class="t" style="left:1707px;top:232px;font-size:12.3px;color:#1a73e8;-webkit-text-stroke-width:0.15px">Показати дані за останні 30 днів</div>
<div class="abs" style="left:317px;top:264px;width:1596px;height:2px;background:#dadce0"></div>
<div class="abs" style="left:317px;top:266px;width:1596px;height:754px;background:#fff"></div>
<div class="abs" style="left:1913px;top:267px;width:7px;height:753px;background:#f1f3f4"></div>
<div class="abs" style="left:1914px;top:446px;width:6px;height:49px;background:#bdbdbd"></div>
<svg style="left:347px;top:279px" width="13" height="14" viewBox="0 0 13 14"><path d="M0.8 1.5H11.2L7.3 6.5V13H4.7V6.5Z" stroke="#1a73e8" stroke-width="1.6" fill="none" stroke-linejoin="round"/></svg>
<div class="abs" style="left:355px;top:272px;width:13px;height:13px;border-radius:50%;background:#1a73e8;color:#fff;font-size:10px;font-weight:bold;text-align:center;line-height:13px">2</div>
<div class="abs" style="left:400px;top:275px;width:159px;height:27px;border:1px solid #dadce0;border-radius:14px"></div>
<div class="t m2" style="left:400px;width:159px;text-align:center;top:283px;font-size:11.2px;color:#3c4043">Статус ресурсу: Увімкнено</div>
<div class="abs" style="left:565px;top:275px;width:232px;height:27px;border:1px solid #dadce0;border-radius:14px"></div>
<div class="t m2" style="left:565px;width:232px;text-align:center;top:283px;font-size:11.2px;color:#3c4043">Рівень: Обліковий запис, Кампанія і ще 3</div>
<div class="t" style="left:807px;top:282px;font-size:11.2px;color:#5f6368">Додати фільтр</div>
<svg style="left:1730px;top:273px" width="15" height="16" viewBox="0 0 15 16"><path d="M0.5 2.5H14.5M5 2.5V0.8H10V2.5M2.3 2.5V15H12.7V2.5M5.7 5.5V12M9.3 5.5V12" stroke="#5f6368" stroke-width="1.8" fill="none"/></svg>
<svg style="left:1803px;top:273px" width="16" height="16" viewBox="0 0 16 16"><path d="M1 1H12L15 4V15H1Z" stroke="#5f6368" stroke-width="1.8" fill="none" stroke-linejoin="round"/><rect x="3.5" y="1" width="7" height="4" fill="#5f6368"/><circle cx="8" cy="10" r="2.3" fill="#5f6368"/></svg>
<svg style="left:1877px;top:275px" width="14" height="14" viewBox="0 0 14 14"><path d="M1 1L13 13M13 1L1 13" stroke="#5f6368" stroke-width="1.8"/></svg>
<div class="t m" style="left:1684px;width:100px;text-align:center;top:295px;font-size:10.6px;color:#5f6368">Очистити ...</div>
<div class="t m" style="left:1760px;width:100px;text-align:center;top:295px;font-size:10.6px;color:#5f6368">Зберегти</div>
<div class="t m" style="left:1833px;width:100px;text-align:center;top:295px;font-size:10.6px;color:#5f6368">Закрити</div>
<div class="abs" style="left:317px;top:311px;width:1596px;height:1px;background:#dadce0"></div>
<div class="abs" style="left:596px;top:312px;width:1px;height:39px;background:#dadce0"></div>
<div class="abs" style="left:727px;top:312px;width:1px;height:39px;background:#dadce0"></div>
<div class="abs" style="left:859px;top:312px;width:1px;height:39px;background:#dadce0"></div>
<div class="abs" style="left:991px;top:312px;width:1px;height:39px;background:#dadce0"></div>
<div class="abs" style="left:1116px;top:312px;width:1px;height:39px;background:#dadce0"></div>
<div class="abs" style="left:1227px;top:312px;width:1px;height:39px;background:#dadce0"></div>
<div class="abs" style="left:1339px;top:312px;width:1px;height:39px;background:#dadce0"></div>
<div class="abs" style="left:1451px;top:312px;width:1px;height:39px;background:#dadce0"></div>
<div class="abs" style="left:1562px;top:312px;width:1px;height:39px;background:#dadce0"></div>
<div class="abs" style="left:1681px;top:312px;width:1px;height:39px;background:#dadce0"></div>
<div class="abs" style="left:1792px;top:312px;width:1px;height:39px;background:#dadce0"></div>
<div class="abs" style="left:334px;top:326px;width:12px;height:12px;border:1.5px solid #5f6368;border-radius:1px"></div>
<div class="abs" style="left:364px;top:327px;width:10px;height:10px;border-radius:50%;background:#5f6368"></div>
<div class="t m2" style="left:403px;top:326px;font-size:10.5px;color:#3c4043">Об’єкт</div>
<div class="t m2" style="left:604px;top:326px;font-size:10.5px;color:#3c4043">Рівень</div>
<div class="t m2" style="left:735px;top:326px;font-size:10.5px;color:#3c4043">Статус</div>
<div class="t m2" style="left:867px;top:326px;font-size:10.5px;color:#3c4043">Ким додано</div>
<div class="t m2" style="left:998px;top:326px;font-size:10.5px;color:#3c4043">Останнє оновлення</div>
<div class="t m2" style="left:1021px;width:200px;text-align:right;top:326px;font-size:10.5px;color:#3c4043">Покази</div>
<svg style="left:1172px;top:326px" width="9" height="11" viewBox="0 0 9 11"><path d="M4.5 0V10M1 6.5L4.5 10L8 6.5" stroke="#3c4043" stroke-width="1.3" fill="none"/></svg>
<div class="t m2" style="left:1132px;width:200px;text-align:right;top:326px;font-size:10.5px;color:#3c4043">Взаємодії</div>
<div class="t m2" style="left:1244px;width:200px;text-align:right;top:320px;font-size:10.5px;color:#3c4043">Коефіцієнт</div>
<div class="t m2" style="left:1244px;width:200px;text-align:right;top:333px;font-size:10.5px;color:#3c4043">взаємодії</div>
<div class="t m2" style="left:1356px;width:200px;text-align:right;top:326px;font-size:10.5px;color:#3c4043">Сер. вартість</div>
<div class="t m2" style="left:1474px;width:200px;text-align:right;top:326px;font-size:10.5px;color:#3c4043">Вартість</div>
<div class="t m2" style="left:1586px;width:200px;text-align:right;top:326px;font-size:10.5px;color:#3c4043">Кліки</div>
<div class="t m2" style="left:1700px;width:200px;text-align:right;top:327px;font-size:10.5px;color:#3c4043"><span style="border-bottom:1px dashed #3c4043;padding-bottom:1px">Конверсії</span></div>
<div class="abs" style="left:317px;top:351px;width:1596px;height:1px;background:#dadce0"></div>
<div class="abs" style="left:317px;top:352px;width:1596px;height:668px;overflow:hidden">
<div class="abs" style="left:279px;top:-10px;width:1px;height:54px;background:#dadce0"></div>
<div class="abs" style="left:410px;top:-10px;width:1px;height:54px;background:#dadce0"></div>
<div class="abs" style="left:542px;top:-10px;width:1px;height:54px;background:#dadce0"></div>
<div class="abs" style="left:674px;top:-10px;width:1px;height:54px;background:#dadce0"></div>
<div class="abs" style="left:799px;top:-10px;width:1px;height:54px;background:#dadce0"></div>
<div class="abs" style="left:910px;top:-10px;width:1px;height:54px;background:#dadce0"></div>
<div class="abs" style="left:1022px;top:-10px;width:1px;height:54px;background:#dadce0"></div>
<div class="abs" style="left:1134px;top:-10px;width:1px;height:54px;background:#dadce0"></div>
<div class="abs" style="left:1245px;top:-10px;width:1px;height:54px;background:#dadce0"></div>
<div class="abs" style="left:1364px;top:-10px;width:1px;height:54px;background:#dadce0"></div>
<div class="abs" style="left:1475px;top:-10px;width:1px;height:54px;background:#dadce0"></div>
<div class="abs" style="left:46px;top:12.0px;width:10px;height:10px;border-radius:50%;background:#188038"></div>
<div class="t" style="left:86px;top:-2.5px;font-size:10.2px;line-height:13px;color:#474b4f">Установить алюминиевый плинтус</div>
<div class="t" style="left:86px;top:10.5px;font-size:10.2px;line-height:13px;color:#474b4f">уже сейчас по лучшей цене! От</div>
<div class="t" style="left:86px;top:23.5px;font-size:10.2px;line-height:13px;color:#474b4f">производителя. Доставка.</div>
<div class="t" style="left:287px;top:10.5px;font-size:10.2px;line-height:13px;color:#474b4f">Оголошення</div>
<div class="t" style="left:418px;top:10.5px;font-size:10.2px;line-height:13px;color:#474b4f">Придатна</div>
<div class="t" style="left:549px;top:10.5px;font-size:10.2px;line-height:13px;color:#474b4f"><span style="border-bottom:1px dashed #3c4043">Рекламодавець</span></div>
<div class="abs" style="left:682px;top:16.2px;width:7px;height:1.2px;background:#5a5e62"></div>
<div class="t" style="left:754px;width:150px;text-align:right;top:10.5px;font-size:10.2px;line-height:13px;color:#474b4f">5</div>
<div class="t" style="left:865px;width:150px;text-align:right;top:10.5px;font-size:10.2px;line-height:13px;color:#474b4f">0</div>
<div class="t" style="left:977px;width:150px;text-align:right;top:10.5px;font-size:10.2px;line-height:13px;color:#474b4f">0,00%</div>
<div class="abs" style="left:1232px;top:16.2px;width:7px;height:1.2px;background:#5a5e62"></div>
<div class="t" style="left:1207px;width:150px;text-align:right;top:10.5px;font-size:10.2px;line-height:13px;color:#474b4f">0,00 грн</div>
<div class="t" style="left:1319px;width:150px;text-align:right;top:10.5px;font-size:10.2px;line-height:13px;color:#474b4f">0</div>
<div class="t" style="left:1433px;width:150px;text-align:right;top:10.5px;font-size:10.2px;line-height:13px;color:#474b4f">0,00</div>
<div class="abs" style="left:0;top:44px;width:1596px;height:1px;background:#dadce0"></div>
<div class="t" style="left:40px;top:54.5px;font-size:10.2px;line-height:13px;color:#1a73e8;letter-spacing:-0.12px">ОА | Пошук | Алюмінієвий Плінтус | RU | Київ та обл</div>
<div class="t" style="left:282px;top:54.5px;font-size:10.2px;line-height:13px;color:#5f6368">›</div>
<div class="t" style="left:288px;top:54.5px;font-size:10.2px;line-height:13px;color:#1a73e8;letter-spacing:-0.1px">Монтаж плинтусов - RU</div>
<div class="t" style="left:403px;top:54.5px;font-size:10.2px;line-height:13px;color:#5f6368">›</div>
<div class="t" style="left:408px;top:54.5px;font-size:10.2px;line-height:13px;color:#3c4043"><span style="border-bottom:1px dashed #3c4043">Оголошення</span></div>
<div class="abs" style="left:0;top:78px;width:1596px;height:1px;background:#dadce0"></div>
<div class="abs" style="left:279px;top:78px;width:1px;height:68px;background:#dadce0"></div>
<div class="abs" style="left:410px;top:78px;width:1px;height:68px;background:#dadce0"></div>
<div class="abs" style="left:542px;top:78px;width:1px;height:68px;background:#dadce0"></div>
<div class="abs" style="left:674px;top:78px;width:1px;height:68px;background:#dadce0"></div>
<div class="abs" style="left:799px;top:78px;width:1px;height:68px;background:#dadce0"></div>
<div class="abs" style="left:910px;top:78px;width:1px;height:68px;background:#dadce0"></div>
<div class="abs" style="left:1022px;top:78px;width:1px;height:68px;background:#dadce0"></div>
<div class="abs" style="left:1134px;top:78px;width:1px;height:68px;background:#dadce0"></div>
<div class="abs" style="left:1245px;top:78px;width:1px;height:68px;background:#dadce0"></div>
<div class="abs" style="left:1364px;top:78px;width:1px;height:68px;background:#dadce0"></div>
<div class="abs" style="left:1475px;top:78px;width:1px;height:68px;background:#dadce0"></div>
<div class="abs" style="left:46px;top:107.0px;width:10px;height:10px;border-radius:50%;background:#188038"></div>
<div class="t" style="left:86px;top:86.0px;font-size:10.2px;line-height:13px;color:#474b4f">Качественный монтаж</div>
<div class="t" style="left:86px;top:99.0px;font-size:10.2px;line-height:13px;color:#474b4f">алюминиевых плинтусов, Свое</div>
<div class="t" style="left:86px;top:112.0px;font-size:10.2px;line-height:13px;color:#474b4f">производство. Полная</div>
<div class="t" style="left:86px;top:125.0px;font-size:10.2px;line-height:13px;color:#474b4f">комплектация.</div>
<div class="t" style="left:287px;top:105.5px;font-size:10.2px;line-height:13px;color:#474b4f">Оголошення</div>
<div class="t" style="left:418px;top:105.5px;font-size:10.2px;line-height:13px;color:#474b4f">Придатна</div>
<div class="t" style="left:549px;top:105.5px;font-size:10.2px;line-height:13px;color:#474b4f"><span style="border-bottom:1px dashed #3c4043">Рекламодавець</span></div>
<div class="abs" style="left:682px;top:111.2px;width:7px;height:1.2px;background:#5a5e62"></div>
<div class="t" style="left:754px;width:150px;text-align:right;top:105.5px;font-size:10.2px;line-height:13px;color:#474b4f">1</div>
<div class="t" style="left:865px;width:150px;text-align:right;top:105.5px;font-size:10.2px;line-height:13px;color:#474b4f">0</div>
<div class="t" style="left:977px;width:150px;text-align:right;top:105.5px;font-size:10.2px;line-height:13px;color:#474b4f">0,00%</div>
<div class="abs" style="left:1232px;top:111.2px;width:7px;height:1.2px;background:#5a5e62"></div>
<div class="t" style="left:1207px;width:150px;text-align:right;top:105.5px;font-size:10.2px;line-height:13px;color:#474b4f">0,00 грн</div>
<div class="t" style="left:1319px;width:150px;text-align:right;top:105.5px;font-size:10.2px;line-height:13px;color:#474b4f">0</div>
<div class="t" style="left:1433px;width:150px;text-align:right;top:105.5px;font-size:10.2px;line-height:13px;color:#474b4f">0,00</div>
<div class="abs" style="left:0;top:146px;width:1596px;height:1px;background:#dadce0"></div>
<div class="t" style="left:40px;top:157.0px;font-size:10.2px;line-height:13px;color:#1a73e8;letter-spacing:-0.12px">ОА | Пошук | Алюмінієвий Плінтус | RU | Київ та обл</div>
<div class="t" style="left:282px;top:157.0px;font-size:10.2px;line-height:13px;color:#5f6368">›</div>
<div class="t" style="left:288px;top:157.0px;font-size:10.2px;line-height:13px;color:#1a73e8;letter-spacing:-0.1px">Монтаж плинтусов - RU</div>
<div class="t" style="left:403px;top:157.0px;font-size:10.2px;line-height:13px;color:#5f6368">›</div>
<div class="t" style="left:408px;top:157.0px;font-size:10.2px;line-height:13px;color:#3c4043"><span style="border-bottom:1px dashed #3c4043">Оголошення</span></div>
<div class="abs" style="left:0;top:181px;width:1596px;height:1px;background:#dadce0"></div>
<div class="abs" style="left:279px;top:181px;width:1px;height:55px;background:#dadce0"></div>
<div class="abs" style="left:410px;top:181px;width:1px;height:55px;background:#dadce0"></div>
<div class="abs" style="left:542px;top:181px;width:1px;height:55px;background:#dadce0"></div>
<div class="abs" style="left:674px;top:181px;width:1px;height:55px;background:#dadce0"></div>
<div class="abs" style="left:799px;top:181px;width:1px;height:55px;background:#dadce0"></div>
<div class="abs" style="left:910px;top:181px;width:1px;height:55px;background:#dadce0"></div>
<div class="abs" style="left:1022px;top:181px;width:1px;height:55px;background:#dadce0"></div>
<div class="abs" style="left:1134px;top:181px;width:1px;height:55px;background:#dadce0"></div>
<div class="abs" style="left:1245px;top:181px;width:1px;height:55px;background:#dadce0"></div>
<div class="abs" style="left:1364px;top:181px;width:1px;height:55px;background:#dadce0"></div>
<div class="abs" style="left:1475px;top:181px;width:1px;height:55px;background:#dadce0"></div>
<div class="abs" style="left:46px;top:203.5px;width:10px;height:10px;border-radius:50%;background:#188038"></div>
<div class="t" style="left:86px;top:189.0px;font-size:10.2px;line-height:13px;color:#474b4f">Монтаж и укладка металлических и</div>
<div class="t" style="left:86px;top:202.0px;font-size:10.2px;line-height:13px;color:#474b4f">алюминиевых плинтусов. Лучший</div>
<div class="t" style="left:86px;top:215.0px;font-size:10.2px;line-height:13px;color:#474b4f">производитель на рынке.</div>
<div class="t" style="left:287px;top:202.0px;font-size:10.2px;line-height:13px;color:#474b4f">Оголошення</div>
<div class="t" style="left:418px;top:189.0px;font-size:10.2px;line-height:13px;color:#d93025">Непридатна</div>
<div class="t" style="left:418px;top:202.0px;font-size:10.2px;line-height:13px;color:#474b4f">Показ оголошення</div>
<div class="t" style="left:418px;top:215.0px;font-size:10.2px;line-height:13px;color:#474b4f">призупинено</div>
<div class="t" style="left:549px;top:202.0px;font-size:10.2px;line-height:13px;color:#474b4f"><span style="border-bottom:1px dashed #3c4043">Рекламодавець</span></div>
<div class="abs" style="left:682px;top:207.7px;width:7px;height:1.2px;background:#5a5e62"></div>
<div class="t" style="left:754px;width:150px;text-align:right;top:202.0px;font-size:10.2px;line-height:13px;color:#474b4f">0</div>
<div class="t" style="left:865px;width:150px;text-align:right;top:202.0px;font-size:10.2px;line-height:13px;color:#474b4f">0</div>
<div class="abs" style="left:1120px;top:207.7px;width:7px;height:1.2px;background:#5a5e62"></div>
<div class="abs" style="left:1232px;top:207.7px;width:7px;height:1.2px;background:#5a5e62"></div>
<div class="t" style="left:1207px;width:150px;text-align:right;top:202.0px;font-size:10.2px;line-height:13px;color:#474b4f">0,00 грн</div>
<div class="t" style="left:1319px;width:150px;text-align:right;top:202.0px;font-size:10.2px;line-height:13px;color:#474b4f">0</div>
<div class="t" style="left:1433px;width:150px;text-align:right;top:202.0px;font-size:10.2px;line-height:13px;color:#474b4f">0,00</div>
<div class="abs" style="left:0;top:236px;width:1596px;height:1px;background:#dadce0"></div>
<div class="abs" style="left:279px;top:236px;width:1px;height:55px;background:#dadce0"></div>
<div class="abs" style="left:410px;top:236px;width:1px;height:55px;background:#dadce0"></div>
<div class="abs" style="left:542px;top:236px;width:1px;height:55px;background:#dadce0"></div>
<div class="abs" style="left:674px;top:236px;width:1px;height:55px;background:#dadce0"></div>
<div class="abs" style="left:799px;top:236px;width:1px;height:55px;background:#dadce0"></div>
<div class="abs" style="left:910px;top:236px;width:1px;height:55px;background:#dadce0"></div>
<div class="abs" style="left:1022px;top:236px;width:1px;height:55px;background:#dadce0"></div>
<div class="abs" style="left:1134px;top:236px;width:1px;height:55px;background:#dadce0"></div>
<div class="abs" style="left:1245px;top:236px;width:1px;height:55px;background:#dadce0"></div>
<div class="abs" style="left:1364px;top:236px;width:1px;height:55px;background:#dadce0"></div>
<div class="abs" style="left:1475px;top:236px;width:1px;height:55px;background:#dadce0"></div>
<div class="abs" style="left:46px;top:258.5px;width:10px;height:10px;border-radius:50%;background:#188038"></div>
<div class="t" style="left:86px;top:244.0px;font-size:10.2px;line-height:13px;color:#474b4f">Самый большой ассортимент в</div>
<div class="t" style="left:86px;top:257.0px;font-size:10.2px;line-height:13px;color:#474b4f">Украине. Свой состав, все <span style="background:#ffff00;display:inline-block;line-height:13px;height:13px;vertical-align:top">налицо</span>.</div>
<div class="t" style="left:86px;top:270.0px;font-size:10.2px;line-height:13px;color:#474b4f">Большие скидки. Звоните.</div>
<div class="t" style="left:287px;top:257.0px;font-size:10.2px;line-height:13px;color:#474b4f">Оголошення</div>
<div class="t" style="left:418px;top:244.0px;font-size:10.2px;line-height:13px;color:#d93025">Непридатна</div>
<div class="t" style="left:418px;top:257.0px;font-size:10.2px;line-height:13px;color:#474b4f">Показ оголошення</div>
<div class="t" style="left:418px;top:270.0px;font-size:10.2px;line-height:13px;color:#474b4f">призупинено</div>
<div class="t" style="left:549px;top:257.0px;font-size:10.2px;line-height:13px;color:#474b4f"><span style="border-bottom:1px dashed #3c4043">Рекламодавець</span></div>
<div class="abs" style="left:682px;top:262.7px;width:7px;height:1.2px;background:#5a5e62"></div>
<div class="t" style="left:754px;width:150px;text-align:right;top:257.0px;font-size:10.2px;line-height:13px;color:#474b4f">0</div>
<div class="t" style="left:865px;width:150px;text-align:right;top:257.0px;font-size:10.2px;line-height:13px;color:#474b4f">0</div>
<div class="abs" style="left:1120px;top:262.7px;width:7px;height:1.2px;background:#5a5e62"></div>
<div class="abs" style="left:1232px;top:262.7px;width:7px;height:1.2px;background:#5a5e62"></div>
<div class="t" style="left:1207px;width:150px;text-align:right;top:257.0px;font-size:10.2px;line-height:13px;color:#474b4f">0,00 грн</div>
<div class="t" style="left:1319px;width:150px;text-align:right;top:257.0px;font-size:10.2px;line-height:13px;color:#474b4f">0</div>
<div class="t" style="left:1433px;width:150px;text-align:right;top:257.0px;font-size:10.2px;line-height:13px;color:#474b4f">0,00</div>
<div class="abs" style="left:0;top:291px;width:1596px;height:1px;background:#dadce0"></div>
<div class="abs" style="left:279px;top:291px;width:1px;height:68px;background:#dadce0"></div>
<div class="abs" style="left:410px;top:291px;width:1px;height:68px;background:#dadce0"></div>
<div class="abs" style="left:542px;top:291px;width:1px;height:68px;background:#dadce0"></div>
<div class="abs" style="left:674px;top:291px;width:1px;height:68px;background:#dadce0"></div>
<div class="abs" style="left:799px;top:291px;width:1px;height:68px;background:#dadce0"></div>
<div class="abs" style="left:910px;top:291px;width:1px;height:68px;background:#dadce0"></div>
<div class="abs" style="left:1022px;top:291px;width:1px;height:68px;background:#dadce0"></div>
<div class="abs" style="left:1134px;top:291px;width:1px;height:68px;background:#dadce0"></div>
<div class="abs" style="left:1245px;top:291px;width:1px;height:68px;background:#dadce0"></div>
<div class="abs" style="left:1364px;top:291px;width:1px;height:68px;background:#dadce0"></div>
<div class="abs" style="left:1475px;top:291px;width:1px;height:68px;background:#dadce0"></div>
<div class="abs" style="left:46px;top:320.0px;width:10px;height:10px;border-radius:50%;background:#188038"></div>
<div class="t" style="left:86px;top:299.0px;font-size:10.2px;line-height:13px;color:#474b4f">Качественный монтаж</div>
<div class="t" style="left:86px;top:312.0px;font-size:10.2px;line-height:13px;color:#474b4f">алюминиевых плинтусов, Свое</div>
<div class="t" style="left:86px;top:325.0px;font-size:10.2px;line-height:13px;color:#474b4f">производство. Полная</div>
<div class="t" style="left:86px;top:338.0px;font-size:10.2px;line-height:13px;color:#474b4f">комплектация.</div>
<div class="t" style="left:287px;top:318.5px;font-size:10.2px;line-height:13px;color:#474b4f">Оголошення</div>
<div class="t" style="left:418px;top:305.5px;font-size:10.2px;line-height:13px;color:#d93025">Непридатна</div>
<div class="t" style="left:418px;top:318.5px;font-size:10.2px;line-height:13px;color:#474b4f">Показ оголошення</div>
<div class="t" style="left:418px;top:331.5px;font-size:10.2px;line-height:13px;color:#474b4f">призупинено</div>
<div class="t" style="left:549px;top:318.5px;font-size:10.2px;line-height:13px;color:#474b4f"><span style="border-bottom:1px dashed #3c4043">Рекламодавець</span></div>
<div class="abs" style="left:682px;top:324.2px;width:7px;height:1.2px;background:#5a5e62"></div>
<div class="t" style="left:754px;width:150px;text-align:right;top:318.5px;font-size:10.2px;line-height:13px;color:#474b4f">0</div>
<div class="t" style="left:865px;width:150px;text-align:right;top:318.5px;font-size:10.2px;line-height:13px;color:#474b4f">0</div>
<div class="abs" style="left:1120px;top:324.2px;width:7px;height:1.2px;background:#5a5e62"></div>
<div class="abs" style="left:1232px;top:324.2px;width:7px;height:1.2px;background:#5a5e62"></div>
<div class="t" style="left:1207px;width:150px;text-align:right;top:318.5px;font-size:10.2px;line-height:13px;color:#474b4f">0,00 грн</div>
<div class="t" style="left:1319px;width:150px;text-align:right;top:318.5px;font-size:10.2px;line-height:13px;color:#474b4f">0</div>
<div class="t" style="left:1433px;width:150px;text-align:right;top:318.5px;font-size:10.2px;line-height:13px;color:#474b4f">0,00</div>
<div class="abs" style="left:0;top:359px;width:1596px;height:1px;background:#dadce0"></div>
<div class="abs" style="left:279px;top:359px;width:1px;height:55px;background:#dadce0"></div>
<div class="abs" style="left:410px;top:359px;width:1px;height:55px;background:#dadce0"></div>
<div class="abs" style="left:542px;top:359px;width:1px;height:55px;background:#dadce0"></div>
<div class="abs" style="left:674px;top:359px;width:1px;height:55px;background:#dadce0"></div>
<div class="abs" style="left:799px;top:359px;width:1px;height:55px;background:#dadce0"></div>
<div class="abs" style="left:910px;top:359px;width:1px;height:55px;background:#dadce0"></div>
<div class="abs" style="left:1022px;top:359px;width:1px;height:55px;background:#dadce0"></div>
<div class="abs" style="left:1134px;top:359px;width:1px;height:55px;background:#dadce0"></div>
<div class="abs" style="left:1245px;top:359px;width:1px;height:55px;background:#dadce0"></div>
<div class="abs" style="left:1364px;top:359px;width:1px;height:55px;background:#dadce0"></div>
<div class="abs" style="left:1475px;top:359px;width:1px;height:55px;background:#dadce0"></div>
<div class="abs" style="left:46px;top:381.5px;width:10px;height:10px;border-radius:50%;background:#188038"></div>
<div class="t" style="left:86px;top:367.0px;font-size:10.2px;line-height:13px;color:#474b4f">Установка укладка металлических</div>
<div class="t" style="left:86px;top:380.0px;font-size:10.2px;line-height:13px;color:#474b4f">и алюминиевых плинтусов. Лучший</div>
<div class="t" style="left:86px;top:393.0px;font-size:10.2px;line-height:13px;color:#474b4f">производитель на рынке.</div>
<div class="t" style="left:287px;top:380.0px;font-size:10.2px;line-height:13px;color:#474b4f">Оголошення</div>
<div class="t" style="left:418px;top:367.0px;font-size:10.2px;line-height:13px;color:#d93025">Непридатна</div>
<div class="t" style="left:418px;top:380.0px;font-size:10.2px;line-height:13px;color:#474b4f">Показ оголошення</div>
<div class="t" style="left:418px;top:393.0px;font-size:10.2px;line-height:13px;color:#474b4f">призупинено</div>
<div class="t" style="left:549px;top:380.0px;font-size:10.2px;line-height:13px;color:#474b4f"><span style="border-bottom:1px dashed #3c4043">Рекламодавець</span></div>
<div class="abs" style="left:682px;top:385.7px;width:7px;height:1.2px;background:#5a5e62"></div>
<div class="t" style="left:754px;width:150px;text-align:right;top:380.0px;font-size:10.2px;line-height:13px;color:#474b4f">0</div>
<div class="t" style="left:865px;width:150px;text-align:right;top:380.0px;font-size:10.2px;line-height:13px;color:#474b4f">0</div>
<div class="abs" style="left:1120px;top:385.7px;width:7px;height:1.2px;background:#5a5e62"></div>
<div class="abs" style="left:1232px;top:385.7px;width:7px;height:1.2px;background:#5a5e62"></div>
<div class="t" style="left:1207px;width:150px;text-align:right;top:380.0px;font-size:10.2px;line-height:13px;color:#474b4f">0,00 грн</div>
<div class="t" style="left:1319px;width:150px;text-align:right;top:380.0px;font-size:10.2px;line-height:13px;color:#474b4f">0</div>
<div class="t" style="left:1433px;width:150px;text-align:right;top:380.0px;font-size:10.2px;line-height:13px;color:#474b4f">0,00</div>
<div class="abs" style="left:0;top:414px;width:1596px;height:1px;background:#dadce0"></div>
<div class="t" style="left:40px;top:425.0px;font-size:10.2px;line-height:13px;color:#1a73e8;letter-spacing:-0.12px">ОА | Пошук | Алюмінієвий Плінтус | RU | Київ та обл</div>
<div class="t" style="left:282px;top:425.0px;font-size:10.2px;line-height:13px;color:#5f6368">›</div>
<div class="t" style="left:288px;top:425.0px;font-size:10.2px;line-height:13px;color:#1a73e8;letter-spacing:-0.1px">Монтаж плинтусов - RU</div>
<div class="t" style="left:403px;top:425.0px;font-size:10.2px;line-height:13px;color:#5f6368">›</div>
<div class="t" style="left:408px;top:425.0px;font-size:10.2px;line-height:13px;color:#3c4043"><span style="border-bottom:1px dashed #3c4043">Оголошення</span></div>
<div class="abs" style="left:0;top:449px;width:1596px;height:1px;background:#dadce0"></div>
<div class="abs" style="left:0;top:450px;width:1596px;height:53px;background:#f6f8f7"></div>
<div class="abs" style="left:279px;top:449px;width:1px;height:54px;background:#dadce0"></div>
<div class="abs" style="left:410px;top:449px;width:1px;height:54px;background:#dadce0"></div>
<div class="abs" style="left:542px;top:449px;width:1px;height:54px;background:#dadce0"></div>
<div class="abs" style="left:674px;top:449px;width:1px;height:54px;background:#dadce0"></div>
<div class="abs" style="left:799px;top:449px;width:1px;height:54px;background:#dadce0"></div>
<div class="abs" style="left:910px;top:449px;width:1px;height:54px;background:#dadce0"></div>
<div class="abs" style="left:1022px;top:449px;width:1px;height:54px;background:#dadce0"></div>
<div class="abs" style="left:1134px;top:449px;width:1px;height:54px;background:#dadce0"></div>
<div class="abs" style="left:1245px;top:449px;width:1px;height:54px;background:#dadce0"></div>
<div class="abs" style="left:1364px;top:449px;width:1px;height:54px;background:#dadce0"></div>
<div class="abs" style="left:1475px;top:449px;width:1px;height:54px;background:#dadce0"></div>
<div class="abs" style="left:46px;top:471.0px;width:10px;height:10px;border-radius:50%;background:#188038"></div>
<div class="t" style="left:86px;top:456.5px;font-size:10.2px;line-height:13px;color:#474b4f">Производитель Sintezal.</div>
<div class="t" style="left:86px;top:469.5px;font-size:10.2px;line-height:13px;color:#474b4f">Собственный склад. 100% наличие.</div>
<div class="t" style="left:86px;top:482.5px;font-size:10.2px;line-height:13px;color:#474b4f">Постоянные скидки. Звоните.</div>
<div class="t" style="left:287px;top:469.5px;font-size:10.2px;line-height:13px;color:#474b4f">Оголошення</div>
<div class="t" style="left:418px;top:469.5px;font-size:10.2px;line-height:13px;color:#474b4f">Придатна</div>
<div class="t" style="left:549px;top:469.5px;font-size:10.2px;line-height:13px;color:#474b4f"><span style="border-bottom:1px dashed #3c4043">Рекламодавець</span></div>
<div class="abs" style="left:682px;top:475.2px;width:7px;height:1.2px;background:#5a5e62"></div>
<div class="t" style="left:754px;width:150px;text-align:right;top:469.5px;font-size:10.2px;line-height:13px;color:#474b4f">0</div>
<div class="t" style="left:865px;width:150px;text-align:right;top:469.5px;font-size:10.2px;line-height:13px;color:#474b4f">0</div>
<div class="abs" style="left:1120px;top:475.2px;width:7px;height:1.2px;background:#5a5e62"></div>
<div class="abs" style="left:1232px;top:475.2px;width:7px;height:1.2px;background:#5a5e62"></div>
<div class="t" style="left:1207px;width:150px;text-align:right;top:469.5px;font-size:10.2px;line-height:13px;color:#474b4f">0,00 грн</div>
<div class="t" style="left:1319px;width:150px;text-align:right;top:469.5px;font-size:10.2px;line-height:13px;color:#474b4f">0</div>
<div class="t" style="left:1433px;width:150px;text-align:right;top:469.5px;font-size:10.2px;line-height:13px;color:#474b4f">0,00</div>
<div class="abs" style="left:0;top:503px;width:1596px;height:1px;background:#dadce0"></div>
<div class="t" style="left:40px;top:513.5px;font-size:10.2px;line-height:13px;color:#1a73e8;letter-spacing:-0.12px">ОА | Пошук | Алюмінієвий Плінтус | RU | Київ та обл</div>
<div class="t" style="left:282px;top:513.5px;font-size:10.2px;line-height:13px;color:#5f6368">›</div>
<div class="t" style="left:288px;top:513.5px;font-size:10.2px;line-height:13px;color:#1a73e8;letter-spacing:-0.1px">Монтаж плинтусов - RU</div>
<div class="t" style="left:403px;top:513.5px;font-size:10.2px;line-height:13px;color:#5f6368">›</div>
<div class="t" style="left:408px;top:513.5px;font-size:10.2px;line-height:13px;color:#3c4043"><span style="border-bottom:1px dashed #3c4043">Оголошення</span></div>
<div class="abs" style="left:0;top:537px;width:1596px;height:1px;background:#dadce0"></div>
<div class="abs" style="left:279px;top:537px;width:1px;height:55px;background:#dadce0"></div>
<div class="abs" style="left:410px;top:537px;width:1px;height:55px;background:#dadce0"></div>
<div class="abs" style="left:542px;top:537px;width:1px;height:55px;background:#dadce0"></div>
<div class="abs" style="left:674px;top:537px;width:1px;height:55px;background:#dadce0"></div>
<div class="abs" style="left:799px;top:537px;width:1px;height:55px;background:#dadce0"></div>
<div class="abs" style="left:910px;top:537px;width:1px;height:55px;background:#dadce0"></div>
<div class="abs" style="left:1022px;top:537px;width:1px;height:55px;background:#dadce0"></div>
<div class="abs" style="left:1134px;top:537px;width:1px;height:55px;background:#dadce0"></div>
<div class="abs" style="left:1245px;top:537px;width:1px;height:55px;background:#dadce0"></div>
<div class="abs" style="left:1364px;top:537px;width:1px;height:55px;background:#dadce0"></div>
<div class="abs" style="left:1475px;top:537px;width:1px;height:55px;background:#dadce0"></div>
<div class="abs" style="left:46px;top:559.5px;width:10px;height:10px;border-radius:50%;background:#188038"></div>
<div class="t" style="left:86px;top:545.0px;font-size:10.2px;line-height:13px;color:#474b4f">Самый большой ассортимент в</div>
<div class="t" style="left:86px;top:558.0px;font-size:10.2px;line-height:13px;color:#474b4f">Украине. Свой склад, все <span style="background:#ff9632;display:inline-block;line-height:13px;height:13px;vertical-align:top">налицо</span>.</div>
<div class="t" style="left:86px;top:571.0px;font-size:10.2px;line-height:13px;color:#474b4f">Большие скидки. Звоните.</div>
<div class="t" style="left:287px;top:558.0px;font-size:10.2px;line-height:13px;color:#474b4f">Оголошення</div>
<div class="t" style="left:418px;top:558.0px;font-size:10.2px;line-height:13px;color:#474b4f">Придатна</div>
<div class="t" style="left:549px;top:558.0px;font-size:10.2px;line-height:13px;color:#474b4f"><span style="border-bottom:1px dashed #3c4043">Рекламодавець</span></div>
<div class="abs" style="left:682px;top:563.7px;width:7px;height:1.2px;background:#5a5e62"></div>
<div class="t" style="left:754px;width:150px;text-align:right;top:558.0px;font-size:10.2px;line-height:13px;color:#474b4f">0</div>
<div class="t" style="left:865px;width:150px;text-align:right;top:558.0px;font-size:10.2px;line-height:13px;color:#474b4f">0</div>
<div class="abs" style="left:1120px;top:563.7px;width:7px;height:1.2px;background:#5a5e62"></div>
<div class="abs" style="left:1232px;top:563.7px;width:7px;height:1.2px;background:#5a5e62"></div>
<div class="t" style="left:1207px;width:150px;text-align:right;top:558.0px;font-size:10.2px;line-height:13px;color:#474b4f">0,00 грн</div>
<div class="t" style="left:1319px;width:150px;text-align:right;top:558.0px;font-size:10.2px;line-height:13px;color:#474b4f">0</div>
<div class="t" style="left:1433px;width:150px;text-align:right;top:558.0px;font-size:10.2px;line-height:13px;color:#474b4f">0,00</div>
<div class="abs" style="left:0;top:592px;width:1596px;height:1px;background:#dadce0"></div>
<div class="t" style="left:40px;top:603.0px;font-size:10.2px;line-height:13px;color:#1a73e8;letter-spacing:-0.12px">ОА | Пошук | Алюмінієвий Плінтус | RU | Київ та обл</div>
<div class="t" style="left:282px;top:603.0px;font-size:10.2px;line-height:13px;color:#5f6368">›</div>
<div class="t" style="left:288px;top:603.0px;font-size:10.2px;line-height:13px;color:#1a73e8;letter-spacing:-0.1px">Плинтус с подсветкой для пола - RU #2</div>
<div class="t" style="left:476px;top:603.0px;font-size:10.2px;line-height:13px;color:#5f6368">›</div>
<div class="t" style="left:482px;top:603.0px;font-size:10.2px;line-height:13px;color:#3c4043"><span style="border-bottom:1px dashed #3c4043">Оголошення</span></div>
<div class="abs" style="left:0;top:627px;width:1596px;height:1px;background:#dadce0"></div>
<div class="abs" style="left:279px;top:627px;width:1px;height:55px;background:#dadce0"></div>
<div class="abs" style="left:410px;top:627px;width:1px;height:55px;background:#dadce0"></div>
<div class="abs" style="left:542px;top:627px;width:1px;height:55px;background:#dadce0"></div>
<div class="abs" style="left:674px;top:627px;width:1px;height:55px;background:#dadce0"></div>
<div class="abs" style="left:799px;top:627px;width:1px;height:55px;background:#dadce0"></div>
<div class="abs" style="left:910px;top:627px;width:1px;height:55px;background:#dadce0"></div>
<div class="abs" style="left:1022px;top:627px;width:1px;height:55px;background:#dadce0"></div>
<div class="abs" style="left:1134px;top:627px;width:1px;height:55px;background:#dadce0"></div>
<div class="abs" style="left:1245px;top:627px;width:1px;height:55px;background:#dadce0"></div>
<div class="abs" style="left:1364px;top:627px;width:1px;height:55px;background:#dadce0"></div>
<div class="abs" style="left:1475px;top:627px;width:1px;height:55px;background:#dadce0"></div>
<div class="abs" style="left:46px;top:649.5px;width:10px;height:10px;border-radius:50%;background:#188038"></div>
<div class="t" style="left:86px;top:635.0px;font-size:10.2px;line-height:13px;color:#474b4f">Плинтус с подсветкой для пола по</div>
<div class="t" style="left:86px;top:648.0px;font-size:10.2px;line-height:13px;color:#474b4f">лучшей цене в Украине. Доставка</div>
<div class="t" style="left:86px;top:661.0px;font-size:10.2px;line-height:13px;color:#474b4f">по всей Украине.</div>
<div class="t" style="left:287px;top:648.0px;font-size:10.2px;line-height:13px;color:#474b4f">Оголошення</div>
<div class="t" style="left:418px;top:635.0px;font-size:10.2px;line-height:13px;color:#d93025">Непридатна</div>
<div class="t" style="left:418px;top:648.0px;font-size:10.2px;line-height:13px;color:#474b4f">Групу оголошень</div>
<div class="t" style="left:418px;top:661.0px;font-size:10.2px;line-height:13px;color:#474b4f">призупинено</div>
<div class="t" style="left:549px;top:648.0px;font-size:10.2px;line-height:13px;color:#474b4f"><span style="border-bottom:1px dashed #3c4043">Рекламодавець</span></div>
<div class="abs" style="left:682px;top:653.7px;width:7px;height:1.2px;background:#5a5e62"></div>
<div class="t" style="left:754px;width:150px;text-align:right;top:648.0px;font-size:10.2px;line-height:13px;color:#474b4f">0</div>
<div class="t" style="left:865px;width:150px;text-align:right;top:648.0px;font-size:10.2px;line-height:13px;color:#474b4f">0</div>
<div class="abs" style="left:1120px;top:653.7px;width:7px;height:1.2px;background:#5a5e62"></div>
<div class="abs" style="left:1232px;top:653.7px;width:7px;height:1.2px;background:#5a5e62"></div>
<div class="t" style="left:1207px;width:150px;text-align:right;top:648.0px;font-size:10.2px;line-height:13px;color:#474b4f">0,00 грн</div>
<div class="t" style="left:1319px;width:150px;text-align:right;top:648.0px;font-size:10.2px;line-height:13px;color:#474b4f">0</div>
<div class="t" style="left:1433px;width:150px;text-align:right;top:648.0px;font-size:10.2px;line-height:13px;color:#474b4f">0,00</div>
<div class="abs" style="left:0;top:682px;width:1596px;height:1px;background:#dadce0"></div>
</div>
<div class="abs" style="left:317px;top:351px;width:1596px;height:4px;background:linear-gradient(rgba(0,0,0,.10),rgba(0,0,0,0))"></div>
<div class="abs" style="left:1305px;top:100px;width:442px;height:65px;background:#211b1e;border-radius:10px;box-shadow:0 3px 10px rgba(0,0,0,.35)"></div>
<div class="t" style="left:1325px;top:124px;font-size:14.5px;color:#f2e6ec;font-weight:bold">налицо</div>
<div class="abs" style="left:1378px;top:122px;width:1px;height:21px;background:#f2e6ec"></div>
<div class="t" style="left:1549px;top:125px;font-size:16px;color:#e8dde2">2/2</div>
<div class="abs" style="left:1591px;top:112px;width:1px;height:40px;background:#5e4e55"></div>
<svg style="left:1618px;top:128px" width="14" height="8" viewBox="0 0 14 8"><path d="M1 7L7 1L13 7" stroke="#e8dde2" stroke-width="1.8" fill="none"/></svg>
<svg style="left:1663px;top:128px" width="14" height="8" viewBox="0 0 14 8"><path d="M1 1L7 7L13 1" stroke="#e8dde2" stroke-width="1.8" fill="none"/></svg>
<svg style="left:1708px;top:125px" width="14" height="14" viewBox="0 0 14 14"><path d="M1 1L13 13M13 1L1 13" stroke="#e8dde2" stroke-width="1.8"/></svg>
<div class="t" style="left:1421px;top:894px;font-size:25px;color:rgba(128,128,128,.5)">Активация Windows</div>
<div class="t" style="left:1421px;top:928px;font-size:17.5px;color:rgba(128,128,128,.5)">Чтобы активировать Windows, перейдите в раздел</div>
<div class="t" style="left:1421px;top:953px;font-size:17.5px;color:rgba(128,128,128,.5)">"Параметры".</div>
<svg style="left:384px;top:852px" width="15" height="22" viewBox="0 0 15 22"><path d="M1.5 1.2L1.5 17L5.3 13.4L8.4 19.6L10.6 18.7L7.9 12.8L12.8 12.7Z" fill="#fff" stroke="#111" stroke-width="1.3" stroke-linejoin="round"/></svg>
<div class="abs" style="left:0;top:1020px;width:1920px;height:60px;background:linear-gradient(90deg,#1c222a 0px,#1d2128 150px,#2a1e18 260px,#301e15 500px,#2c1d16 900px,#281c17 1350px,#241d1b 1550px,#1f2024 1700px,#1d2125 1920px);border-top:1px solid #3a3a3a"></div>
<svg style="left:24px;top:1037px" width="32" height="20" viewBox="0 0 32 20"><defs><linearGradient id="cld" x1="0" y1="0" x2="0" y2="1"><stop offset="0" stop-color="#c8daf7"/><stop offset="1" stop-color="#7d9fe0"/></linearGradient></defs><path d="M5 19A5 5 0 0 1 4 9.5A6.5 6.5 0 0 1 10 7A7 7 0 0 1 23 7.5A6 6 0 0 1 26 9A5 5 0 0 1 27 19Z" fill="url(#cld)"/></svg>
<div class="t" style="left:64px;top:1032px;font-size:15px;color:#fff">2°C</div>
<div class="t" style="left:64px;top:1051px;font-size:15px;color:#e6e6e6">Cloudy</div>
<div class="abs" style="left:558px;top:1036px;width:14px;height:14px;background:linear-gradient(135deg,#6fdcff,#1aa0f0);border-radius:2px"></div>
<div class="abs" style="left:573px;top:1036px;width:14px;height:14px;background:linear-gradient(135deg,#6fdcff,#1aa0f0);border-radius:2px"></div>
<div class="abs" style="left:558px;top:1051px;width:14px;height:14px;background:linear-gradient(135deg,#6fdcff,#1aa0f0);border-radius:2px"></div>
<div class="abs" style="left:573px;top:1051px;width:14px;height:14px;background:linear-gradient(135deg,#6fdcff,#1aa0f0);border-radius:2px"></div>
<div class="abs" style="left:603px;top:1030px;width:275px;height:40px;border-radius:20px;background:rgba(255,255,255,.11);border:1px solid rgba(255,255,255,.08)"></div>
<svg style="left:617px;top:1039px" width="21" height="22" viewBox="0 0 21 22"><circle cx="9" cy="9" r="7" stroke="#e6e6e6" stroke-width="2" fill="none"/><path d="M14 14.5L19 20" stroke="#e6e6e6" stroke-width="2.2"/></svg>
<div class="t" style="left:649px;top:1040px;font-size:19px;color:#d8d8d8">Поиск</div>
<div class="abs" style="left:893px;top:1044px;width:23px;height:20px;background:#6d6d6d;border-radius:3px"></div>
<div class="abs" style="left:902px;top:1036px;width:23px;height:20px;background:#ececec;border-radius:3px"></div>
<svg style="left:949px;top:1036px" width="28" height="28" viewBox="0 0 28 28"><defs><linearGradient id="cp1" x1="0" y1="0" x2="1" y2="1"><stop offset="0" stop-color="#1fa3f5"/><stop offset=".45" stop-color="#35c979"/><stop offset="1" stop-color="#f7c633"/></linearGradient><linearGradient id="cp2" x1="0" y1="0" x2="1" y2="1"><stop offset="0" stop-color="#5c6cf7"/><stop offset=".5" stop-color="#c75cf0"/><stop offset="1" stop-color="#f5603d"/></linearGradient></defs><path d="M11 3Q12.5 1 15 1H20Q17.5 1.5 16.5 4.5L11 22Q10 25.5 6.5 26H4Q1 26 1.5 22.5L4 12Q5 8 8 8H9.5Z" fill="url(#cp1)"/><path d="M17 25Q15.5 27 13 27H8Q10.5 26.5 11.5 23.5L17 6Q18 2.5 21.5 2H24Q27 2 26.5 5.5L24 16Q23 20 20 20H18.5Z" fill="url(#cp2)"/></svg>
<div class="abs" style="left:1006px;top:1035px;width:22px;height:28px;background:#e8e8e8;border-radius:1px"></div>
<svg style="left:1016px;top:1046px" width="18" height="18" viewBox="0 0 18 18"><path d="M9 1Q4 1 4 4V7H10V8H2Q0 8 0 12Q0 16 3 16H5V13Q5 11 7 11H12Q14 11 14 9V4Q14 1 9 1Z" fill="#3873b3"/><path d="M9 17Q14 17 14 14V11H8V10H16Q18 10 18 6Q18 2 15 2H13V5Q13 7 11 7H6Q4 7 4 9V14Q4 17 9 17Z" fill="#f7c93e" opacity=".95"/></svg>
<div class="abs" style="left:1050px;top:1025px;width:49px;height:50px;background:rgba(255,255,255,.08);border-radius:5px"></div>
<svg style="left:1059px;top:1036px" width="28" height="28" viewBox="0 0 28 28"><circle cx="14" cy="14" r="13" fill="#db4437"/><path d="M14 14L2.7 20.5A13 13 0 0 0 20.5 25.3Z" fill="#0f9d58"/><path d="M14 14L20.5 25.3A13 13 0 0 0 25.3 7.5H14Z" fill="#ffcd40"/><path d="M14 14L2.7 20.5A13 13 0 0 1 3 7Z" fill="#0f9d58"/><circle cx="14" cy="14" r="6" fill="#fff"/><circle cx="14" cy="14" r="4.7" fill="#4285f4"/></svg>
<div class="abs" style="left:1073px;top:1029px;width:20px;height:20px;border-radius:50%;background:#8a5ad6;color:#fff;font-size:11px;text-align:center;line-height:20px">Д</div>
<div class="abs" style="left:1064px;top:1070px;width:20px;height:3px;background:#f18a7f;border-radius:2px"></div>
<div class="abs" style="left:1114px;top:1038px;width:30px;height:24px;background:#f4c32c;border-radius:2px"></div>
<div class="abs" style="left:1114px;top:1034px;width:13px;height:6px;background:#e7a91a;border-radius:2px 2px 0 0"></div>
<div class="abs" style="left:1121px;top:1052px;width:16px;height:6px;background:#1b74c9"></div>
<div class="abs" style="left:1124px;top:1071px;width:8px;height:3px;background:#9a9a9a;border-radius:2px"></div>
<div class="abs" style="left:1170px;top:1037px;width:27px;height:27px;border-radius:50%;background:#2aa3de"></div>
<svg style="left:1175px;top:1044px" width="17" height="13" viewBox="0 0 17 13"><path d="M1 6L16 0L13 13L8 9L6 12V8L13 2L5 7Z" fill="#fff"/></svg>
<div class="abs" style="left:1214px;top:1025px;width:49px;height:50px;background:rgba(220,110,130,.45);border-radius:5px"></div>
<div class="abs" style="left:1225px;top:1036px;width:28px;height:28px;border-radius:50%;background:#5865f2"></div>
<svg style="left:1230px;top:1043px" width="18" height="14" viewBox="0 0 18 14"><path d="M3 1.5Q6 0 8 1H10Q12 0 15 1.5Q18 6 17.5 12Q15.5 13.5 13 14L12 12Q13.5 11.5 14 11Q9 13 4 11Q4.5 11.5 6 12L5 14Q2.5 13.5 0.5 12Q0 6 3 1.5Z" fill="#fff"/><circle cx="6" cy="8" r="1.5" fill="#5865f2"/><circle cx="12" cy="8" r="1.5" fill="#5865f2"/></svg>
<div class="abs" style="left:1241px;top:1031px;width:16px;height:16px;border-radius:50%;background:#f24a4a;border:3px solid #f0a0a8"></div>
<div class="abs" style="left:1219px;top:1070px;width:40px;height:3px;background:#f18a9a;border-radius:2px"></div>
<div class="abs" style="left:1283px;top:1036px;width:23px;height:26px;background:linear-gradient(#41a5ee,#185abd);border-radius:3px"></div>
<div class="abs" style="left:1278px;top:1046px;width:15px;height:15px;background:#185abd;border-radius:2px;color:#fff;font-size:10px;font-weight:bold;text-align:center;line-height:15px">W</div>
<div class="abs" style="left:1289px;top:1071px;width:8px;height:3px;background:#9a9a9a;border-radius:2px"></div>
<svg style="left:1334px;top:1035px" width="30" height="31" viewBox="0 0 30 31"><path d="M15 1A14 13.5 0 0 1 15 28H11L7 30.5V26.5A13.5 13.5 0 0 1 15 1Z" fill="#7360f2"/><path d="M15 3.5A11.5 11 0 0 1 15 25.5H11.5L9 27.3V24.8A11 11 0 0 1 15 3.5Z" fill="none" stroke="#fff" stroke-width="1.8"/><path d="M10 9Q11 7.5 12 8.5L13.5 10.5Q14 11.5 13 12.3Q14 15 16.5 16.5Q17.3 15.5 18.3 16L20.3 17.5Q21.3 18.5 19.8 19.5Q18 21 15 19Q11 16.5 9.5 12.5Q9 10.5 10 9Z" fill="#fff"/></svg>
<div class="abs" style="left:1349px;top:1028px;width:23px;height:16px;border-radius:8px;background:#f23d3d;color:#fff;font-size:11px;text-align:center;line-height:16px">189</div>
<div class="abs" style="left:1344px;top:1071px;width:8px;height:3px;background:#9a9a9a;border-radius:2px"></div>
<svg style="left:1552px;top:1045px" width="14" height="9" viewBox="0 0 14 9"><path d="M1 8L7 2L13 8" stroke="#fff" stroke-width="1.6" fill="none"/></svg>
<svg style="left:1586px;top:1040px" width="24" height="20" viewBox="0 0 24 20"><path d="M6 17A5 5 0 0 1 5 7A7 7 0 0 1 18 6A5.5 5.5 0 0 1 19 17Z" stroke="#aaa" stroke-width="1.6" fill="#555"/><path d="M2 1L22 19" stroke="#ccc" stroke-width="1.6"/></svg>
<svg style="left:1628px;top:1040px" width="20" height="20" viewBox="0 0 20 20"><path d="M19 1L1 9L9 11L11 19Z" stroke="#e98a6a" stroke-width="1.6" fill="none" stroke-linejoin="round"/></svg>
<div class="t" style="left:1672px;top:1042px;font-size:15px;color:#fff">УКР</div>
<svg style="left:1722px;top:1041px" width="22" height="17" viewBox="0 0 22 17"><path d="M1 6Q11 -2 21 6M4 9.5Q11 3 18 9.5M7 13Q11 9.5 15 13" stroke="#fff" stroke-width="1.8" fill="none"/><circle cx="11" cy="15.5" r="1.5" fill="#fff"/></svg>
<svg style="left:1753px;top:1040px" width="24" height="20" viewBox="0 0 24 20"><path d="M2 7H6L11 2V18L6 13H2Z" stroke="#fff" stroke-width="1.6" fill="none" stroke-linejoin="round"/><path d="M14 7Q16 10 14 13M17 4.5Q20.5 10 17 15.5M20 2Q25 10 20 18" stroke="#fff" stroke-width="1.5" fill="none"/></svg>
<svg style="left:1781px;top:1039px" width="26" height="22" viewBox="0 0 26 22"><rect x="2" y="7" width="20" height="12" rx="2" stroke="#fff" stroke-width="1.6" fill="none"/><rect x="22" y="11" width="2.5" height="4" fill="#fff"/><path d="M8 1L4 9H9L6 16" stroke="#fff" stroke-width="1.6" fill="none"/></svg>
<div class="t" style="left:1796px;width:100px;text-align:right;top:1032px;font-size:15px;color:#fff">16:09</div>
<div class="t" style="left:1796px;width:100px;text-align:right;top:1052px;font-size:15px;color:#fff">25.02.2026</div>
<!--APP-->
</body></html>
